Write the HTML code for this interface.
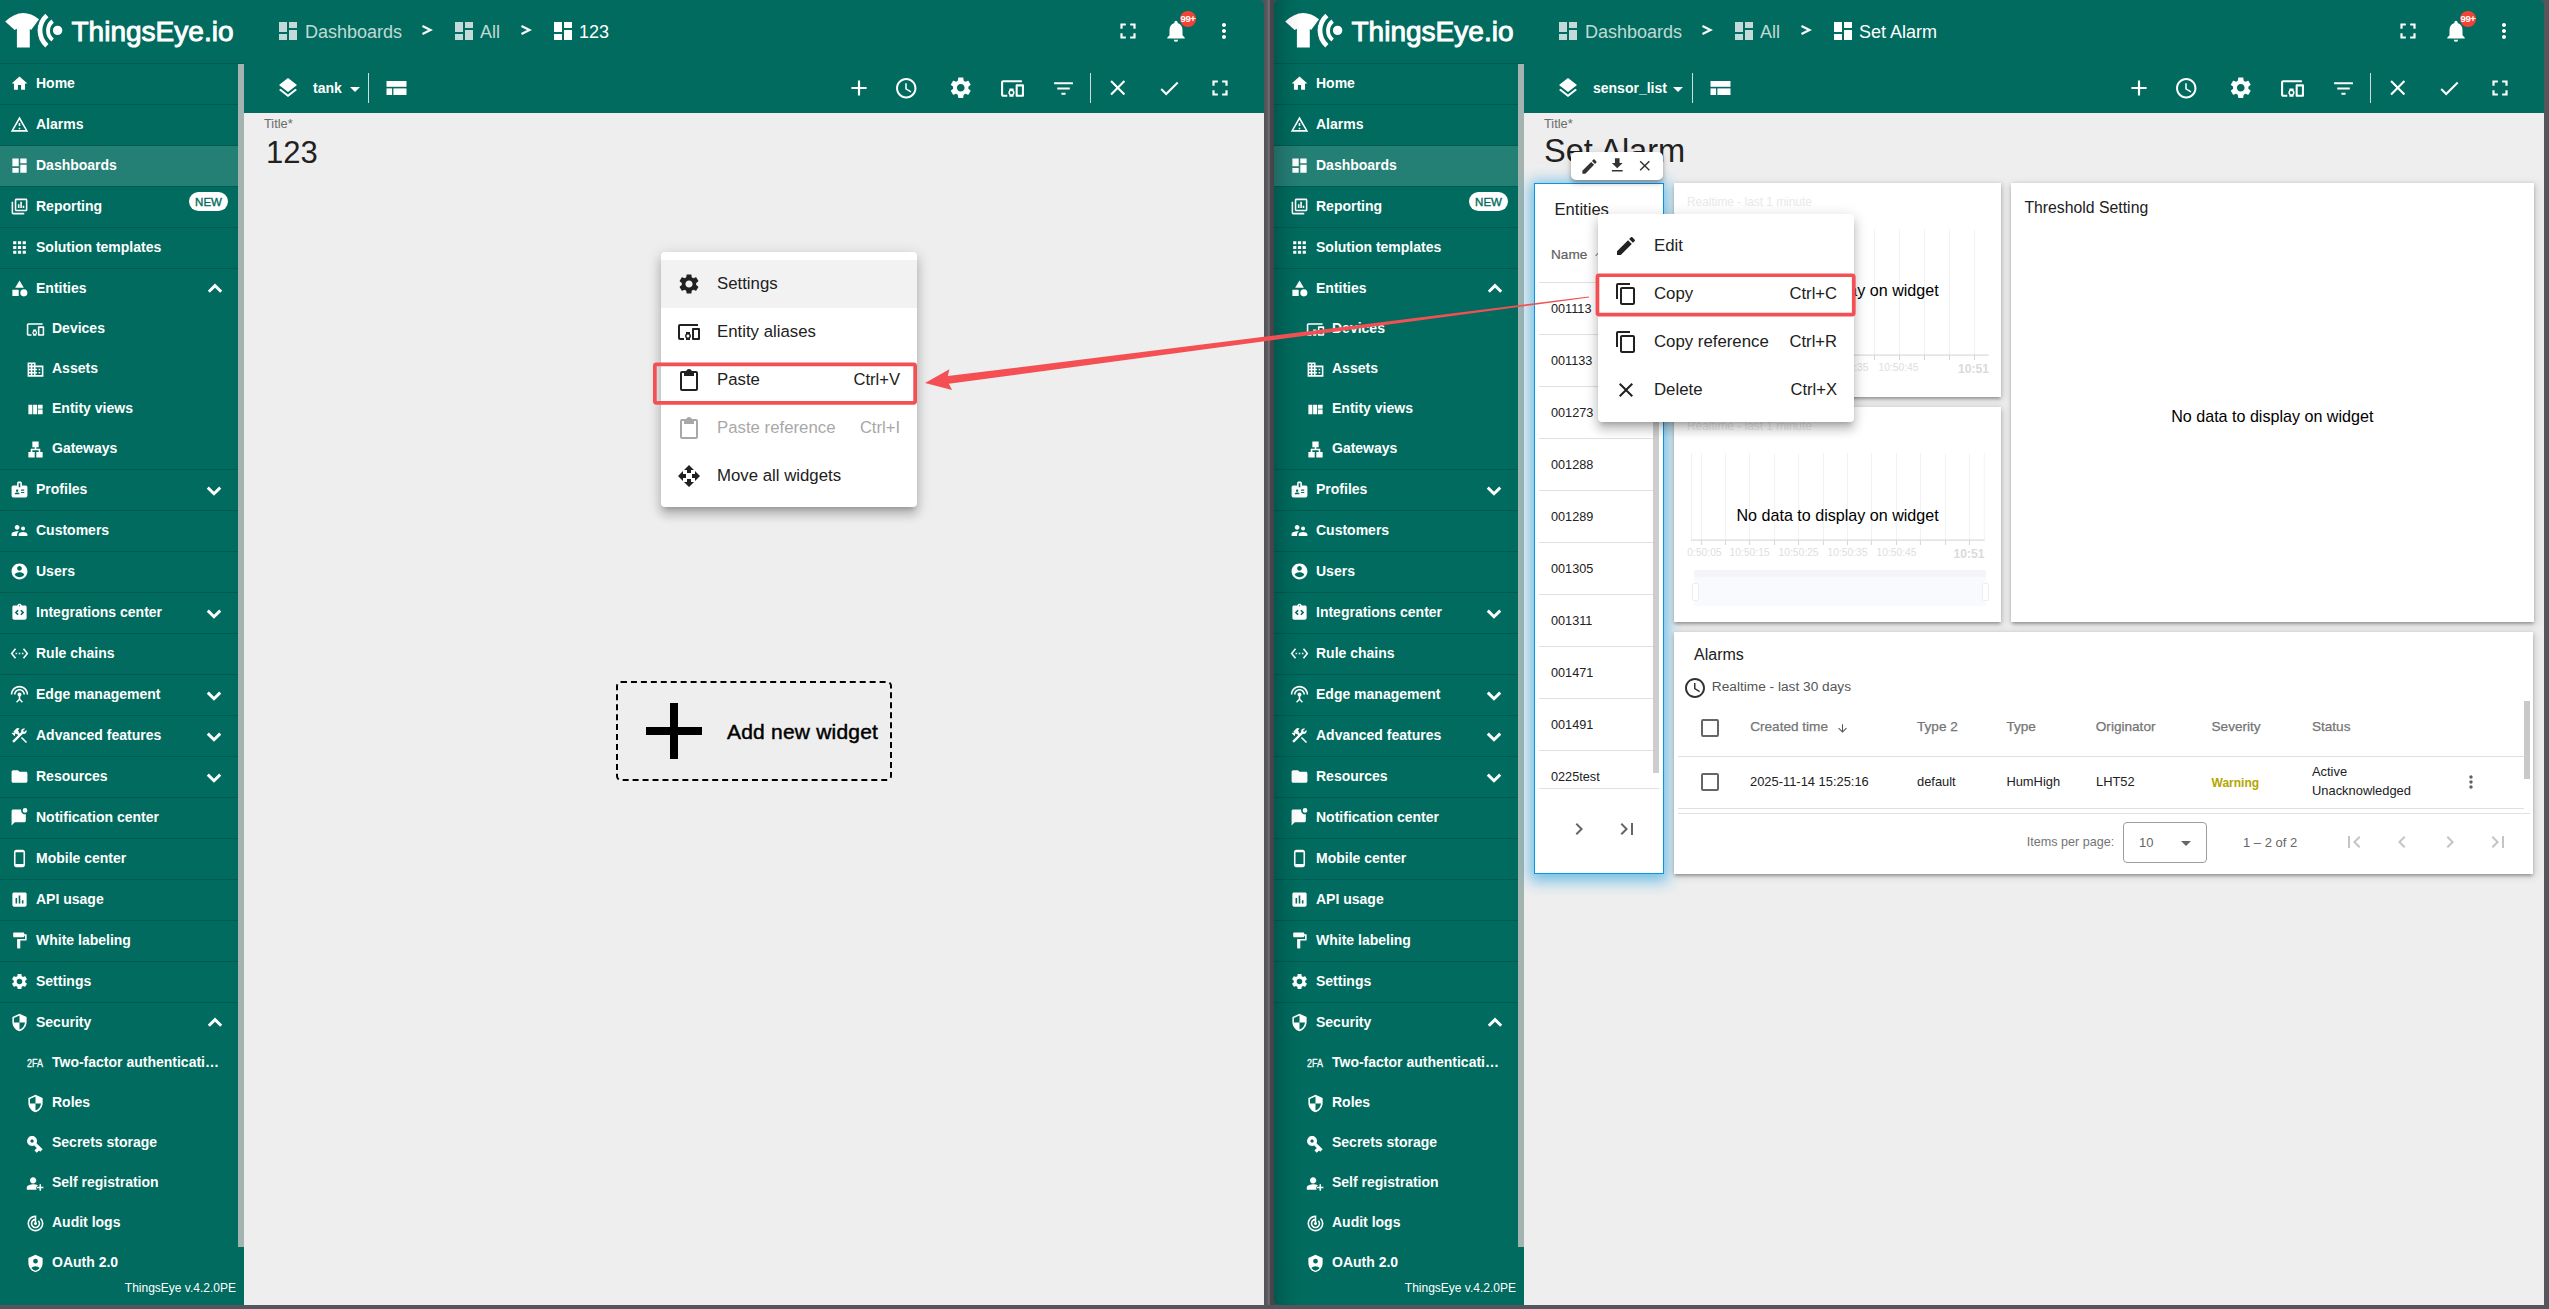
<!DOCTYPE html><html><head><meta charset="utf-8"><style>html,body{margin:0;padding:0;}body{width:2549px;height:1309px;position:relative;overflow:hidden;background:#55555b;font-family:"Liberation Sans", sans-serif;}svg{overflow:visible;}</style></head><body>
<div style="position:absolute;left:1264px;top:0;width:10px;height:1309px;background:linear-gradient(90deg,#525258 0%,#5a5a60 35%,#7a7a7a 50%,#48484c 62%,#444448 100%);"></div>
<div style="position:absolute;left:0px;top:0px;width:1264px;height:63px;background:#006b5e;border-top-right-radius:5px;"></div>
<svg style="position:absolute;left:0px;top:0px;" width="70" height="60" viewBox="0 0 70 60"><path fill="#fff" d="M5.2 21.5 Q22 5.5 39 19.3 L31.2 30 L29.8 28.8 L29.8 47.4 L16.9 47.4 L16.9 28.8 L14.6 30 Z"/><path fill="none" stroke="#fff" stroke-width="4.8" d="M46.88 15.51 A20 20 0 0 0 46.88 45.69"/><path fill="none" stroke="#fff" stroke-width="3.9" d="M52.61 21.14 A12 12 0 0 0 52.61 40.06"/><circle cx="57.6" cy="30.4" r="4.7" fill="#fff"/></svg>
<svg style="position:absolute;left:70px;top:10px" width="170" height="45" viewBox="0 0 170 45"><text x="1.5" y="31.2" font-family="Liberation Sans" font-size="26.8" font-weight="normal" fill="#fff" stroke="#fff" stroke-width="0.9" textLength="162" lengthAdjust="spacingAndGlyphs">ThingsEye.io</text></svg>
<svg style="position:absolute;left:275.50px;top:19.00px;" width="24" height="24" viewBox="0 0 24 24"><path fill="rgba(255,255,255,0.76)" d="M3 13h8V3H3v10zm0 8h8v-6H3v6zm10 0h8V11h-8v10zm0-18v6h8V3h-8z"/></svg>
<div style="position:absolute;left:305px;top:22.56px;font-size:18px;line-height:18px;color:rgba(255,255,255,0.76);font-weight:400;white-space:nowrap;">Dashboards</div>
<svg style="position:absolute;left:420px;top:24px;" width="14" height="12" viewBox="0 0 14 12"><polyline points="2.5,2 10.5,6 2.5,10" fill="none" stroke="#fff" stroke-width="2.2"/></svg>
<svg style="position:absolute;left:451.50px;top:19.00px;" width="24" height="24" viewBox="0 0 24 24"><path fill="rgba(255,255,255,0.76)" d="M3 13h8V3H3v10zm0 8h8v-6H3v6zm10 0h8V11h-8v10zm0-18v6h8V3h-8z"/></svg>
<div style="position:absolute;left:480px;top:22.56px;font-size:18px;line-height:18px;color:rgba(255,255,255,0.76);font-weight:400;white-space:nowrap;">All</div>
<svg style="position:absolute;left:519px;top:24px;" width="14" height="12" viewBox="0 0 14 12"><polyline points="2.5,2 10.5,6 2.5,10" fill="none" stroke="#fff" stroke-width="2.2"/></svg>
<svg style="position:absolute;left:550.50px;top:19.00px;" width="24" height="24" viewBox="0 0 24 24"><path fill="#fff" d="M3 13h8V3H3v10zm0 8h8v-6H3v6zm10 0h8V11h-8v10zm0-18v6h8V3h-8z"/></svg>
<div style="position:absolute;left:579px;top:22.56px;font-size:18px;line-height:18px;color:#fff;font-weight:400;white-space:nowrap;">123</div>
<svg style="position:absolute;left:1115.00px;top:18.00px;" width="26" height="26" viewBox="0 0 24 24"><path fill="#fff" d="M7 14H5v5h5v-2H7v-3zm-2-4h2V7h3V5H5v5zm12 7h-3v2h5v-5h-2v3zM14 5v2h3v3h2V5h-5z"/></svg>
<svg style="position:absolute;left:1162.50px;top:17.50px;" width="26" height="26" viewBox="0 0 24 24"><path fill="#fff" d="M12 22c1.1 0 2-.9 2-2h-4c0 1.1.89 2 2 2zm6-6v-5c0-3.07-1.64-5.64-4.5-6.32V4c0-.83-.67-1.5-1.5-1.5s-1.5.67-1.5 1.5v.68C7.63 5.36 6 7.92 6 11v5l-2 2v1h16v-1l-2-2z"/></svg>
<svg style="position:absolute;left:1212.00px;top:19.00px;" width="24" height="24" viewBox="0 0 24 24"><path fill="#fff" d="M12 8c1.1 0 2-.9 2-2s-.9-2-2-2-2 .9-2 2 .9 2 2 2zm0 2c-1.1 0-2 .9-2 2s.9 2 2 2 2-.9 2-2-.9-2-2-2zm0 6c-1.1 0-2 .9-2 2s.9 2 2 2 2-.9 2-2-.9-2-2-2z"/></svg>
<div style="position:absolute;left:1180px;top:11px;width:16px;height:16px;border-radius:8px;background:#f44336;"></div>
<div style="position:absolute;left:688px;width:1000px;text-align:center;top:14.17px;font-size:9.6px;line-height:9.6px;color:#fff;font-weight:700;white-space:nowrap;letter-spacing:-0.4px;">99+</div>
<div style="position:absolute;left:0px;top:63px;width:244px;height:1242px;background:#006b5e;"></div>
<div style="position:absolute;left:0px;top:63px;width:244px;height:1px;background:#005b50;"></div>
<svg style="position:absolute;left:9.50px;top:74.00px;" width="19" height="19" viewBox="0 0 24 24"><path fill="#fff" d="M10 20v-6h4v6h5v-8h3L12 3 2 12h3v8z"/></svg>
<div style="position:absolute;left:36px;top:75.85px;font-size:14px;line-height:14px;color:#fff;font-weight:700;white-space:nowrap;">Home</div>
<div style="position:absolute;left:0px;top:104px;width:238px;height:1px;background:#005b50;"></div>
<svg style="position:absolute;left:9.50px;top:115.00px;" width="19" height="19" viewBox="0 0 24 24"><path fill="#fff" d="M12 5.99L19.53 19H4.47L12 5.99M12 2L1 21h22L12 2zm1 14h-2v2h2v-2zm0-6h-2v4h2v-4z"/></svg>
<div style="position:absolute;left:36px;top:116.85px;font-size:14px;line-height:14px;color:#fff;font-weight:700;white-space:nowrap;">Alarms</div>
<div style="position:absolute;left:0px;top:145px;width:238px;height:1px;background:#005b50;"></div>
<div style="position:absolute;left:0px;top:146px;width:238px;height:40px;background:#247f75;"></div>
<svg style="position:absolute;left:9.50px;top:156.00px;" width="19" height="19" viewBox="0 0 24 24"><path fill="#fff" d="M3 13h8V3H3v10zm0 8h8v-6H3v6zm10 0h8V11h-8v10zm0-18v6h8V3h-8z"/></svg>
<div style="position:absolute;left:36px;top:157.85px;font-size:14px;line-height:14px;color:#fff;font-weight:700;white-space:nowrap;">Dashboards</div>
<div style="position:absolute;left:0px;top:186px;width:238px;height:1px;background:#005b50;"></div>
<svg style="position:absolute;left:9.50px;top:197.00px;" width="19" height="19" viewBox="0 0 24 24"><path fill="#fff" d="M4 6H2v14c0 1.1.9 2 2 2h14v-2H4V6zm16-4H8c-1.1 0-2 .9-2 2v12c0 1.1.9 2 2 2h12c1.1 0 2-.9 2-2V4c0-1.1-.9-2-2-2zm0 14H8V4h12v12zM10 9h2v5h-2zm3-3h2v8h-2zm3 5h2v3h-2z"/></svg>
<div style="position:absolute;left:36px;top:198.85px;font-size:14px;line-height:14px;color:#fff;font-weight:700;white-space:nowrap;">Reporting</div>
<div style="position:absolute;left:189px;top:192.0px;width:39px;height:19px;border-radius:10px;background:#fff;"></div>
<div style="position:absolute;left:-291.5px;width:1000px;text-align:center;top:197.07px;font-size:11.5px;line-height:11.5px;color:#006b5e;font-weight:400;white-space:nowrap;-webkit-text-stroke:0.35px #006b5e;">NEW</div>
<div style="position:absolute;left:0px;top:227px;width:238px;height:1px;background:#005b50;"></div>
<svg style="position:absolute;left:9.50px;top:238.00px;" width="19" height="19" viewBox="0 0 24 24"><path fill="#fff" d="M4 8h4V4H4v4zm6 12h4v-4h-4v4zm-6 0h4v-4H4v4zm0-6h4v-4H4v4zm6 0h4v-4h-4v4zm6-10v4h4V4h-4zm-6 4h4V4h-4v4zm6 6h4v-4h-4v4zm0 6h4v-4h-4v4z"/></svg>
<div style="position:absolute;left:36px;top:239.85px;font-size:14px;line-height:14px;color:#fff;font-weight:700;white-space:nowrap;">Solution templates</div>
<div style="position:absolute;left:0px;top:268px;width:238px;height:1px;background:#005b50;"></div>
<svg style="position:absolute;left:9.50px;top:279.00px;" width="19" height="19" viewBox="0 0 24 24"><path fill="#fff" d="M12 2l-5.5 9h11zM17.5 13a4.5 4.5 0 1 0 0 9a4.5 4.5 0 1 0 0-9zM3 13.5h8v8H3z"/></svg>
<div style="position:absolute;left:36px;top:280.85px;font-size:14px;line-height:14px;color:#fff;font-weight:700;white-space:nowrap;">Entities</div>
<svg style="position:absolute;left:207px;top:281.5px;" width="16" height="12" viewBox="0 0 16 12"><polyline points="1.8,9.8 8,3.6 14.2,9.8" fill="none" stroke="#fff" stroke-width="2.9"/></svg>
<svg style="position:absolute;left:25.50px;top:320.00px;" width="19" height="19" viewBox="0 0 24 24"><path fill="#fff" d="M3 6h18V4H3c-1.1 0-2 .9-2 2v12c0 1.1.9 2 2 2h4v-2H3V6zm10 6H9v1.78c-.61.55-1 1.33-1 2.22s.39 1.67 1 2.22V20h4v-1.78c.61-.55 1-1.34 1-2.22s-.39-1.67-1-2.22V12zm-2 5.5c-.83 0-1.5-.67-1.5-1.5s.67-1.5 1.5-1.5 1.5.67 1.5 1.5-.67 1.5-1.5 1.5zM22 8h-6c-.5 0-1 .5-1 1v10c0 .5.5 1 1 1h6c.5 0 1-.5 1-1V9c0-.5-.5-1-1-1zm-1 10h-4v-8h4v8z"/></svg>
<div style="position:absolute;left:52px;top:320.95px;font-size:14px;line-height:14px;color:#fff;font-weight:700;white-space:nowrap;">Devices</div>
<svg style="position:absolute;left:25.50px;top:360.00px;" width="19" height="19" viewBox="0 0 24 24"><path fill="#fff" d="M12 7V3H2v18h20V7H12zM6 19H4v-2h2v2zm0-4H4v-2h2v2zm0-4H4V9h2v2zm0-4H4V5h2v2zm4 12H8v-2h2v2zm0-4H8v-2h2v2zm0-4H8V9h2v2zm0-4H8V5h2v2zm10 12h-8v-2h2v-2h-2v-2h2v-2h-2V9h8v10zm-2-8h-2v2h2v-2zm0 4h-2v2h2v-2z"/></svg>
<div style="position:absolute;left:52px;top:360.95px;font-size:14px;line-height:14px;color:#fff;font-weight:700;white-space:nowrap;">Assets</div>
<svg style="position:absolute;left:25.50px;top:400.00px;" width="19" height="19" viewBox="0 0 24 24"><path fill="#fff" d="M3 6h5v12H3zM9 6h5v12H9zM15 6h6v5h-6zM15 12h6v6h-6z"/></svg>
<div style="position:absolute;left:52px;top:400.95px;font-size:14px;line-height:14px;color:#fff;font-weight:700;white-space:nowrap;">Entity views</div>
<svg style="position:absolute;left:25.50px;top:440.00px;" width="19" height="19" viewBox="0 0 24 24"><path fill="#fff" d="M13 22h8v-7h-3v-4h-5V9h3V2H8v7h3v2H6v4H3v7h8v-7H8v-2h8v2h-3z"/></svg>
<div style="position:absolute;left:52px;top:440.95px;font-size:14px;line-height:14px;color:#fff;font-weight:700;white-space:nowrap;">Gateways</div>
<div style="position:absolute;left:0px;top:469px;width:238px;height:1px;background:#005b50;"></div>
<svg style="position:absolute;left:9.50px;top:480.00px;" width="19" height="19" viewBox="0 0 24 24"><path fill="#fff" d="M20 7h-5V4c0-1.1-.9-2-2-2h-2c-1.1 0-2 .9-2 2v3H4c-1.1 0-2 .9-2 2v11c0 1.1.9 2 2 2h16c1.1 0 2-.9 2-2V9c0-1.1-.9-2-2-2zM9 12c.83 0 1.5.67 1.5 1.5S9.83 15 9 15s-1.5-.67-1.5-1.5S8.17 12 9 12zm3 6H6v-.43c0-.6.36-1.15.92-1.39.64-.28 1.34-.43 2.08-.43s1.44.15 2.08.43c.55.24.92.78.92 1.39V18zm1-9h-2V4h2v5zm5 7.5h-4V15h4v1.5zm0-3h-4V12h4v1.5z"/></svg>
<div style="position:absolute;left:36px;top:481.85px;font-size:14px;line-height:14px;color:#fff;font-weight:700;white-space:nowrap;">Profiles</div>
<svg style="position:absolute;left:206px;top:484.5px;" width="16" height="12" viewBox="0 0 16 12"><polyline points="1.8,2.6 8,8.8 14.2,2.6" fill="none" stroke="#fff" stroke-width="2.9"/></svg>
<div style="position:absolute;left:0px;top:510px;width:238px;height:1px;background:#005b50;"></div>
<svg style="position:absolute;left:9.50px;top:521.00px;" width="19" height="19" viewBox="0 0 24 24"><path fill="#fff" d="M16.5 12c1.38 0 2.49-1.12 2.49-2.5S17.88 7 16.5 7C15.12 7 14 8.12 14 9.5s1.12 2.5 2.5 2.5zM9 11c1.66 0 2.99-1.34 2.99-3S10.66 5 9 5C7.34 5 6 6.34 6 8s1.34 3 3 3zm7.5 3c-1.83 0-5.5.92-5.5 2.75V19h11v-2.25c0-1.83-3.67-2.75-5.5-2.75zM9 13c-2.33 0-7 1.17-7 3.5V19h7v-2.25c0-.85.33-2.34 2.37-3.47C10.5 13.1 9.66 13 9 13z"/></svg>
<div style="position:absolute;left:36px;top:522.85px;font-size:14px;line-height:14px;color:#fff;font-weight:700;white-space:nowrap;">Customers</div>
<div style="position:absolute;left:0px;top:551px;width:238px;height:1px;background:#005b50;"></div>
<svg style="position:absolute;left:9.50px;top:562.00px;" width="19" height="19" viewBox="0 0 24 24"><path fill="#fff" d="M12 2C6.48 2 2 6.48 2 12s4.48 10 10 10 10-4.48 10-10S17.52 2 12 2zm0 3c1.66 0 3 1.34 3 3s-1.34 3-3 3-3-1.34-3-3 1.34-3 3-3zm0 14.2c-2.5 0-4.71-1.28-6-3.22.03-1.99 4-3.08 6-3.08 1.99 0 5.97 1.09 6 3.08-1.29 1.94-3.5 3.22-6 3.22z"/></svg>
<div style="position:absolute;left:36px;top:563.85px;font-size:14px;line-height:14px;color:#fff;font-weight:700;white-space:nowrap;">Users</div>
<div style="position:absolute;left:0px;top:592px;width:238px;height:1px;background:#005b50;"></div>
<svg style="position:absolute;left:9.50px;top:603.00px;" width="19" height="19" viewBox="0 0 24 24"><path fill="#fff" d="M19 3h-4.18C14.4 1.84 13.3 1 12 1s-2.4.84-2.82 2H5c-1.1 0-2 .9-2 2v14c0 1.1.9 2 2 2h14c1.1 0 2-.9 2-2V5c0-1.1-.9-2-2-2zM11 14.17l-1.41 1.42L6 12l3.59-3.59L11 9.83 8.83 12 11 14.17zM12 4.25c-.41 0-.75-.34-.75-.75s.34-.75.75-.75.75.34.75.75-.34.75-.75.75zm2.41 11.34L13 14.17 15.17 12 13 9.83l1.41-1.42L18 12l-3.59 3.59z"/></svg>
<div style="position:absolute;left:36px;top:604.85px;font-size:14px;line-height:14px;color:#fff;font-weight:700;white-space:nowrap;">Integrations center</div>
<svg style="position:absolute;left:206px;top:607.5px;" width="16" height="12" viewBox="0 0 16 12"><polyline points="1.8,2.6 8,8.8 14.2,2.6" fill="none" stroke="#fff" stroke-width="2.9"/></svg>
<div style="position:absolute;left:0px;top:633px;width:238px;height:1px;background:#005b50;"></div>
<svg style="position:absolute;left:9.50px;top:644.00px;" width="19" height="19" viewBox="0 0 24 24"><path fill="#fff" d="M7.77 6.76L6.23 5.48.82 12l5.41 6.52 1.54-1.28L3.42 12l4.35-5.24zM7 13h2v-2H7v2zm10-2h-2v2h2v-2zm-6 2h2v-2h-2v2zm6.77-7.52l-1.54 1.28L20.58 12l-4.35 5.24 1.54 1.28L23.18 12l-5.41-6.52z"/></svg>
<div style="position:absolute;left:36px;top:645.85px;font-size:14px;line-height:14px;color:#fff;font-weight:700;white-space:nowrap;">Rule chains</div>
<div style="position:absolute;left:0px;top:674px;width:238px;height:1px;background:#005b50;"></div>
<svg style="position:absolute;left:9.50px;top:685.00px;" width="19" height="19" viewBox="0 0 24 24"><path fill="#fff" d="M12 5c-3.87 0-7 3.13-7 7h2c0-2.76 2.24-5 5-5s5 2.24 5 5h2c0-3.87-3.13-7-7-7zm1 9.29c.88-.39 1.5-1.26 1.5-2.29 0-1.38-1.12-2.5-2.5-2.5S9.5 10.62 9.5 12c0 1.02.62 1.9 1.5 2.29v3.3L7.59 21 9 22.41l3-3 3 3L16.41 21 13 17.59v-3.3zM12 1C5.93 1 1 5.93 1 12h2c0-4.97 4.03-9 9-9s9 4.03 9 9h2c0-6.07-4.93-11-11-11z"/></svg>
<div style="position:absolute;left:36px;top:686.85px;font-size:14px;line-height:14px;color:#fff;font-weight:700;white-space:nowrap;">Edge management</div>
<svg style="position:absolute;left:206px;top:689.5px;" width="16" height="12" viewBox="0 0 16 12"><polyline points="1.8,2.6 8,8.8 14.2,2.6" fill="none" stroke="#fff" stroke-width="2.9"/></svg>
<div style="position:absolute;left:0px;top:715px;width:238px;height:1px;background:#005b50;"></div>
<svg style="position:absolute;left:9.50px;top:726.00px;" width="19" height="19" viewBox="0 0 24 24"><path fill="#fff" d="M13.78 15.17l1.42-1.42 6.36 6.36-1.41 1.41zM17.5 10c1.93 0 3.5-1.57 3.5-3.5 0-.58-.16-1.12-.41-1.6l-2.7 2.7-1.49-1.49 2.7-2.7c-.48-.25-1.02-.41-1.6-.41C15.57 3 14 4.57 14 6.5c0 .41.08.8.21 1.16l-1.85 1.85-1.78-1.78.71-.71-1.41-1.41L12 3.49c-1.17-1.17-3.07-1.17-4.24 0L4.22 7.03l1.41 1.41H2.81l-.71.71 3.54 3.54.71-.71V9.15l1.41 1.41.71-.71 1.78 1.78-7.41 7.41 2.12 2.12L16.34 9.79c.36.13.75.21 1.16.21z"/></svg>
<div style="position:absolute;left:36px;top:727.85px;font-size:14px;line-height:14px;color:#fff;font-weight:700;white-space:nowrap;">Advanced features</div>
<svg style="position:absolute;left:206px;top:730.5px;" width="16" height="12" viewBox="0 0 16 12"><polyline points="1.8,2.6 8,8.8 14.2,2.6" fill="none" stroke="#fff" stroke-width="2.9"/></svg>
<div style="position:absolute;left:0px;top:756px;width:238px;height:1px;background:#005b50;"></div>
<svg style="position:absolute;left:9.50px;top:767.00px;" width="19" height="19" viewBox="0 0 24 24"><path fill="#fff" d="M10 4H4c-1.1 0-1.99.9-1.99 2L2 18c0 1.1.9 2 2 2h16c1.1 0 2-.9 2-2V8c0-1.1-.9-2-2-2h-8l-2-2z"/></svg>
<div style="position:absolute;left:36px;top:768.85px;font-size:14px;line-height:14px;color:#fff;font-weight:700;white-space:nowrap;">Resources</div>
<svg style="position:absolute;left:206px;top:771.5px;" width="16" height="12" viewBox="0 0 16 12"><polyline points="1.8,2.6 8,8.8 14.2,2.6" fill="none" stroke="#fff" stroke-width="2.9"/></svg>
<div style="position:absolute;left:0px;top:797px;width:238px;height:1px;background:#005b50;"></div>
<svg style="position:absolute;left:9.50px;top:808.00px;" width="19" height="19" viewBox="0 0 24 24"><path fill="#fff" d="M20 6.98V16c0 1.1-.9 2-2 2H6l-4 4V4c0-1.1.9-2 2-2h10.1c-.06.32-.1.66-.1 1 0 2.76 2.24 5 5 5 .34 0 .68-.03 1-.1zM19 0a3 3 0 1 0 0 6a3 3 0 1 0 0-6z"/></svg>
<div style="position:absolute;left:36px;top:809.85px;font-size:14px;line-height:14px;color:#fff;font-weight:700;white-space:nowrap;">Notification center</div>
<div style="position:absolute;left:0px;top:838px;width:238px;height:1px;background:#005b50;"></div>
<svg style="position:absolute;left:9.50px;top:849.00px;" width="19" height="19" viewBox="0 0 24 24"><path fill="#fff" d="M16 1H8C6.34 1 5 2.34 5 4v16c0 1.66 1.34 3 3 3h8c1.66 0 3-1.34 3-3V4c0-1.66-1.34-3-3-3zm1 18H7V4h10v15z"/></svg>
<div style="position:absolute;left:36px;top:850.85px;font-size:14px;line-height:14px;color:#fff;font-weight:700;white-space:nowrap;">Mobile center</div>
<div style="position:absolute;left:0px;top:879px;width:238px;height:1px;background:#005b50;"></div>
<svg style="position:absolute;left:9.50px;top:890.00px;" width="19" height="19" viewBox="0 0 24 24"><path fill="#fff" d="M19 3H5c-1.1 0-2 .9-2 2v14c0 1.1.9 2 2 2h14c1.1 0 2-.9 2-2V5c0-1.1-.9-2-2-2zM9 17H7v-7h2v7zm4 0h-2V7h2v10zm4 0h-2v-4h2v4z"/></svg>
<div style="position:absolute;left:36px;top:891.85px;font-size:14px;line-height:14px;color:#fff;font-weight:700;white-space:nowrap;">API usage</div>
<div style="position:absolute;left:0px;top:920px;width:238px;height:1px;background:#005b50;"></div>
<svg style="position:absolute;left:9.50px;top:931.00px;" width="19" height="19" viewBox="0 0 24 24"><path fill="#fff" d="M18 4V3c0-.55-.45-1-1-1H5c-.55 0-1 .45-1 1v4c0 .55.45 1 1 1h12c.55 0 1-.45 1-1V6h1v4H9v11c0 .55.45 1 1 1h2c.55 0 1-.45 1-1v-9h8V4h-3z"/></svg>
<div style="position:absolute;left:36px;top:932.85px;font-size:14px;line-height:14px;color:#fff;font-weight:700;white-space:nowrap;">White labeling</div>
<div style="position:absolute;left:0px;top:961px;width:238px;height:1px;background:#005b50;"></div>
<svg style="position:absolute;left:9.50px;top:972.00px;" width="19" height="19" viewBox="0 0 24 24"><path fill="#fff" d="M19.14 12.94c.04-.3.06-.61.06-.94 0-.32-.02-.64-.07-.94l2.03-1.58c.18-.14.23-.41.12-.61l-1.92-3.32c-.12-.22-.37-.29-.59-.22l-2.39.96c-.5-.38-1.03-.7-1.62-.94l-.36-2.54c-.04-.24-.24-.41-.48-.41h-3.84c-.24 0-.43.17-.47.41l-.36 2.54c-.59.24-1.13.57-1.62.94l-2.39-.96c-.22-.08-.47 0-.59.22L2.74 8.87c-.12.21-.08.47.12.61l2.03 1.58c-.05.3-.09.63-.09.94s.02.64.07.94l-2.03 1.58c-.18.14-.23.41-.12.61l1.92 3.32c.12.22.37.29.59.22l2.39-.96c.5.38 1.03.7 1.62.94l.36 2.54c.05.24.24.41.48.41h3.84c.24 0 .44-.17.47-.41l.36-2.54c.59-.24 1.13-.56 1.62-.94l2.39.96c.22.08.47 0 .59-.22l1.92-3.32c.12-.22.07-.47-.12-.61l-2.01-1.58zM12 15.6c-1.98 0-3.6-1.62-3.6-3.6s1.62-3.6 3.6-3.6 3.6 1.62 3.6 3.6-1.62 3.6-3.6 3.6z"/></svg>
<div style="position:absolute;left:36px;top:973.85px;font-size:14px;line-height:14px;color:#fff;font-weight:700;white-space:nowrap;">Settings</div>
<div style="position:absolute;left:0px;top:1002px;width:238px;height:1px;background:#005b50;"></div>
<svg style="position:absolute;left:9.50px;top:1013.00px;" width="19" height="19" viewBox="0 0 24 24"><path fill="#fff" d="M12 1L3 5v6c0 5.55 3.84 10.74 9 12 5.16-1.26 9-6.45 9-12V5l-9-4zm0 10.99h7c-.53 4.12-3.28 7.79-7 8.94V12H5V6.3l7-3.11v8.8z"/></svg>
<div style="position:absolute;left:36px;top:1014.85px;font-size:14px;line-height:14px;color:#fff;font-weight:700;white-space:nowrap;">Security</div>
<svg style="position:absolute;left:207px;top:1015.5px;" width="16" height="12" viewBox="0 0 16 12"><polyline points="1.8,9.8 8,3.6 14.2,9.8" fill="none" stroke="#fff" stroke-width="2.9"/></svg>
<div style="position:absolute;left:-465.5px;width:1000px;text-align:center;top:1058.21px;font-size:10.5px;line-height:10.5px;color:#fff;font-weight:400;white-space:nowrap;letter-spacing:0px;transform:scaleX(0.85);-webkit-text-stroke:0.3px #fff;">2FA</div>
<div style="position:absolute;left:52px;top:1054.95px;font-size:14px;line-height:14px;color:#fff;font-weight:700;white-space:nowrap;">Two-factor authenticati…</div>
<svg style="position:absolute;left:25.50px;top:1094.00px;" width="19" height="19" viewBox="0 0 24 24"><path fill="#fff" d="M12 1L3 5v6c0 5.55 3.84 10.74 9 12 5.16-1.26 9-6.45 9-12V5l-9-4zm0 10.99h7c-.53 4.12-3.28 7.79-7 8.94V12H5V6.3l7-3.11v8.8z"/></svg>
<div style="position:absolute;left:52px;top:1094.95px;font-size:14px;line-height:14px;color:#fff;font-weight:700;white-space:nowrap;">Roles</div>
<svg style="position:absolute;left:24.50px;top:1133.50px;transform:rotate(45deg);" width="20" height="20" viewBox="0 0 24 24"><path fill="#fff" d="M12.65 10C11.83 7.67 9.61 6 7 6c-3.31 0-6 2.69-6 6s2.69 6 6 6c2.61 0 4.83-1.67 5.65-4H17v4h4v-4h2v-4H12.65zM7 14c-1.1 0-2-.9-2-2s.9-2 2-2 2 .9 2 2-.9 2-2 2z"/></svg>
<div style="position:absolute;left:52px;top:1134.95px;font-size:14px;line-height:14px;color:#fff;font-weight:700;white-space:nowrap;">Secrets storage</div>
<svg style="position:absolute;left:25.50px;top:1174.00px;" width="19" height="19" viewBox="0 0 24 24"><path fill="#fff" d="M9 13c-2.67 0-8 1.34-8 4v3h12.5c-.32-.6-.5-1.28-.5-2 0-1.6.9-3 2.2-3.7C13 13.5 10.5 13 9 13zM9 12c2.21 0 4-1.79 4-4s-1.79-4-4-4-4 1.79-4 4 1.79 4 4 4zM19 13v3h3v2h-3v3h-2v-3h-3v-2h3v-3z"/></svg>
<div style="position:absolute;left:52px;top:1174.95px;font-size:14px;line-height:14px;color:#fff;font-weight:700;white-space:nowrap;">Self registration</div>
<svg style="position:absolute;left:25.50px;top:1214.00px;" width="19" height="19" viewBox="0 0 24 24"><path fill="#fff" d="M19.07 4.93l-1.41 1.41C19.1 7.79 20 9.79 20 12c0 4.42-3.58 8-8 8s-8-3.58-8-8c0-4.08 3.05-7.44 7-7.93v2.02C8.16 6.57 6 9.03 6 12c0 3.31 2.69 6 6 6s6-2.69 6-6c0-1.66-.67-3.16-1.76-4.24l-1.41 1.41C15.55 9.9 16 10.9 16 12c0 2.21-1.79 4-4 4s-4-1.79-4-4c0-1.86 1.28-3.41 3-3.86v2.14c-.6.35-1 .98-1 1.72 0 1.1.9 2 2 2s2-.9 2-2c0-.74-.4-1.38-1-1.72V2h-1C6.48 2 2 6.48 2 12s4.48 10 10 10 10-4.48 10-10c0-2.76-1.12-5.26-2.93-7.07z"/></svg>
<div style="position:absolute;left:52px;top:1214.95px;font-size:14px;line-height:14px;color:#fff;font-weight:700;white-space:nowrap;">Audit logs</div>
<svg style="position:absolute;left:25.50px;top:1254.00px;" width="19" height="19" viewBox="0 0 24 24"><path fill="#fff" d="M12 1L3 5v6c0 5.55 3.84 10.74 9 12 5.16-1.26 9-6.45 9-12V5l-9-4zm0 5a3 3 0 1 1 0 6 3 3 0 0 1 0-6zm5.13 12A9.69 9.69 0 0 1 12 21a9.69 9.69 0 0 1-5.13-3c.13-1.7 3.43-2.68 5.13-2.68s5 .98 5.13 2.68z"/></svg>
<div style="position:absolute;left:52px;top:1254.95px;font-size:14px;line-height:14px;color:#fff;font-weight:700;white-space:nowrap;">OAuth 2.0</div>
<div style="position:absolute;left:238px;top:64px;width:6px;height:1183px;background:#a3b4b0;"></div>
<div style="position:absolute;right:2313px;top:1281.84px;font-size:12px;line-height:12px;color:#fff;font-weight:400;white-space:nowrap;">ThingsEye v.4.2.0PE</div>
<div style="position:absolute;left:244px;top:63px;width:1020px;height:50px;background:#006b5e;"></div>
<div style="position:absolute;left:244px;top:113px;width:1020px;height:1192px;background:#eeeeee;"></div>
<svg style="position:absolute;left:276.00px;top:75.80px;" width="24" height="24" viewBox="0 0 24 24"><path fill="#fff" d="M11.99 18.54l-7.37-5.73L3 14.07l9 7 9-7-1.63-1.27-7.38 5.74zM12 16l7.36-5.73L21 9l-9-7-9 7 1.63 1.27L12 16z"/></svg>
<div style="position:absolute;left:313px;top:81.15px;font-size:14px;line-height:14px;color:#fff;font-weight:700;white-space:nowrap;">tank</div>
<svg style="position:absolute;left:342.50px;top:76.80px;" width="24" height="24" viewBox="0 0 24 24"><path fill="#fff" d="M7 10l5 5 5-5z"/></svg>
<div style="position:absolute;left:368px;top:73px;width:1px;height:30px;background:rgba(255,255,255,0.8);"></div>
<svg style="position:absolute;left:386px;top:81px;" width="21" height="15" viewBox="0 0 21 15"><rect x="0.5" y="0" width="20" height="5.8" fill="#fff"/><rect x="0.5" y="7.4" width="5.6" height="6.6" fill="#fff"/><rect x="7.4" y="7.4" width="13.1" height="6.6" fill="#fff"/></svg>
<svg style="position:absolute;left:846.00px;top:75.00px;" width="26" height="26" viewBox="0 0 24 24"><path fill="#fff" d="M19 13h-6v6h-2v-6H5v-2h6V5h2v6h6v2z"/></svg>
<svg style="position:absolute;left:893.75px;top:75.75px;" width="24.5" height="24.5" viewBox="0 0 24 24"><path fill="#fff" d="M11.99 2C6.47 2 2 6.48 2 12s4.47 10 9.99 10C17.52 22 22 17.52 22 12S17.52 2 11.99 2zM12 20c-4.42 0-8-3.58-8-8s3.58-8 8-8 8 3.58 8 8-3.58 8-8 8zm.5-13H11v6l5.25 3.15.75-1.23-4.5-2.67z"/></svg>
<svg style="position:absolute;left:948.25px;top:75.25px;" width="25.5" height="25.5" viewBox="0 0 24 24"><path fill="#fff" d="M19.14 12.94c.04-.3.06-.61.06-.94 0-.32-.02-.64-.07-.94l2.03-1.58c.18-.14.23-.41.12-.61l-1.92-3.32c-.12-.22-.37-.29-.59-.22l-2.39.96c-.5-.38-1.03-.7-1.62-.94l-.36-2.54c-.04-.24-.24-.41-.48-.41h-3.84c-.24 0-.43.17-.47.41l-.36 2.54c-.59.24-1.13.57-1.62.94l-2.39-.96c-.22-.08-.47 0-.59.22L2.74 8.87c-.12.21-.08.47.12.61l2.03 1.58c-.05.3-.09.63-.09.94s.02.64.07.94l-2.03 1.58c-.18.14-.23.41-.12.61l1.92 3.32c.12.22.37.29.59.22l2.39-.96c.5.38 1.03.7 1.62.94l.36 2.54c.05.24.24.41.48.41h3.84c.24 0 .44-.17.47-.41l.36-2.54c.59-.24 1.13-.56 1.62-.94l2.39.96c.22.08.47 0 .59-.22l1.92-3.32c.12-.22.07-.47-.12-.61l-2.01-1.58zM12 15.6c-1.98 0-3.6-1.62-3.6-3.6s1.62-3.6 3.6-3.6 3.6 1.62 3.6 3.6-1.62 3.6-3.6 3.6z"/></svg>
<svg style="position:absolute;left:999.50px;top:75.50px;" width="25" height="25" viewBox="0 0 24 24"><path fill="#fff" d="M3 6h18V4H3c-1.1 0-2 .9-2 2v12c0 1.1.9 2 2 2h4v-2H3V6zm10 6H9v1.78c-.61.55-1 1.33-1 2.22s.39 1.67 1 2.22V20h4v-1.78c.61-.55 1-1.34 1-2.22s-.39-1.67-1-2.22V12zm-2 5.5c-.83 0-1.5-.67-1.5-1.5s.67-1.5 1.5-1.5 1.5.67 1.5 1.5-.67 1.5-1.5 1.5zM22 8h-6c-.5 0-1 .5-1 1v10c0 .5.5 1 1 1h6c.5 0 1-.5 1-1V9c0-.5-.5-1-1-1zm-1 10h-4v-8h4v8z"/></svg>
<svg style="position:absolute;left:1050.50px;top:75.50px;" width="25" height="25" viewBox="0 0 24 24"><path fill="#fff" d="M10 18h4v-2h-4v2zM3 6v2h18V6H3zm3 7h12v-2H6v2z"/></svg>
<div style="position:absolute;left:1090px;top:73px;width:1px;height:30px;background:rgba(255,255,255,0.8);"></div>
<svg style="position:absolute;left:1105.25px;top:75.25px;" width="25.5" height="25.5" viewBox="0 0 24 24"><path fill="#fff" d="M19 6.41L17.59 5 12 10.59 6.41 5 5 6.41 10.59 12 5 17.59 6.41 19 12 13.41 17.59 19 19 17.59 13.41 12z"/></svg>
<svg style="position:absolute;left:1156.75px;top:75.75px;" width="24.5" height="24.5" viewBox="0 0 24 24"><path fill="#fff" d="M9 16.17L4.83 12l-1.42 1.41L9 19 21 7l-1.41-1.41z"/></svg>
<svg style="position:absolute;left:1207.00px;top:75.00px;" width="26" height="26" viewBox="0 0 24 24"><path fill="#fff" d="M7 14H5v5h5v-2H7v-3zm-2-4h2V7h3V5H5v5zm12 7h-3v2h5v-5h-2v3zM14 5v2h3v3h2V5h-5z"/></svg>
<div style="position:absolute;left:264px;top:118.16px;font-size:12.8px;line-height:12.8px;color:#6b6b6b;font-weight:400;white-space:nowrap;">Title*</div>
<div style="position:absolute;left:266px;top:136.76px;font-size:31px;line-height:31px;color:#212121;font-weight:400;white-space:nowrap;">123</div>
<div style="position:absolute;left:616px;top:681px;width:272px;height:96px;border:2px dashed #000;border-radius:5px;"></div>
<div style="position:absolute;left:645.5px;top:727.3px;width:56.5px;height:7.5px;background:#000;"></div>
<div style="position:absolute;left:670.2px;top:703px;width:7.5px;height:56px;background:#000;"></div>
<div style="position:absolute;left:727px;top:720.72px;font-size:21px;line-height:21px;color:#000;font-weight:400;white-space:nowrap;-webkit-text-stroke:0.45px #000;letter-spacing:0.2px;">Add new widget</div>
<div style="position:absolute;left:661px;top:252px;width:256px;height:255px;background:#fff;border-radius:4px;box-shadow:0 5px 5px -3px rgba(0,0,0,.2),0 8px 10px 1px rgba(0,0,0,.14),0 3px 14px 2px rgba(0,0,0,.12);"></div>
<div style="position:absolute;left:661px;top:260px;width:256px;height:48px;background:#f2f2f2;"></div>
<svg style="position:absolute;left:677.00px;top:272.00px;" width="24" height="24" viewBox="0 0 24 24"><path fill="#212121" d="M19.14 12.94c.04-.3.06-.61.06-.94 0-.32-.02-.64-.07-.94l2.03-1.58c.18-.14.23-.41.12-.61l-1.92-3.32c-.12-.22-.37-.29-.59-.22l-2.39.96c-.5-.38-1.03-.7-1.62-.94l-.36-2.54c-.04-.24-.24-.41-.48-.41h-3.84c-.24 0-.43.17-.47.41l-.36 2.54c-.59.24-1.13.57-1.62.94l-2.39-.96c-.22-.08-.47 0-.59.22L2.74 8.87c-.12.21-.08.47.12.61l2.03 1.58c-.05.3-.09.63-.09.94s.02.64.07.94l-2.03 1.58c-.18.14-.23.41-.12.61l1.92 3.32c.12.22.37.29.59.22l2.39-.96c.5.38 1.03.7 1.62.94l.36 2.54c.05.24.24.41.48.41h3.84c.24 0 .44-.17.47-.41l.36-2.54c.59-.24 1.13-.56 1.62-.94l2.39.96c.22.08.47 0 .59-.22l1.92-3.32c.12-.22.07-.47-.12-.61l-2.01-1.58zM12 15.6c-1.98 0-3.6-1.62-3.6-3.6s1.62-3.6 3.6-3.6 3.6 1.62 3.6 3.6-1.62 3.6-3.6 3.6z"/></svg>
<div style="position:absolute;left:717px;top:276.38px;font-size:16.8px;line-height:16.8px;color:#212121;font-weight:400;white-space:nowrap;">Settings</div>
<svg style="position:absolute;left:677.00px;top:320.00px;" width="24" height="24" viewBox="0 0 24 24"><path fill="#212121" d="M3 6h18V4H3c-1.1 0-2 .9-2 2v12c0 1.1.9 2 2 2h4v-2H3V6zm10 6H9v1.78c-.61.55-1 1.33-1 2.22s.39 1.67 1 2.22V20h4v-1.78c.61-.55 1-1.34 1-2.22s-.39-1.67-1-2.22V12zm-2 5.5c-.83 0-1.5-.67-1.5-1.5s.67-1.5 1.5-1.5 1.5.67 1.5 1.5-.67 1.5-1.5 1.5zM22 8h-6c-.5 0-1 .5-1 1v10c0 .5.5 1 1 1h6c.5 0 1-.5 1-1V9c0-.5-.5-1-1-1zm-1 10h-4v-8h4v8z"/></svg>
<div style="position:absolute;left:717px;top:324.38px;font-size:16.8px;line-height:16.8px;color:#212121;font-weight:400;white-space:nowrap;">Entity aliases</div>
<svg style="position:absolute;left:677.00px;top:368.00px;" width="24" height="24" viewBox="0 0 24 24"><path fill="#212121" d="M19 3h-4.18C14.4 1.84 13.3 1 12 1c-1.3 0-2.4.84-2.82 2H5c-1.1 0-2 .9-2 2v16c0 1.1.9 2 2 2h14c1.1 0 2-.9 2-2V5c0-1.1-.9-2-2-2zm0 18H5V5h2v3h10V5h2v16z"/></svg>
<div style="position:absolute;left:717px;top:372.38px;font-size:16.8px;line-height:16.8px;color:#212121;font-weight:400;white-space:nowrap;">Paste</div>
<div style="position:absolute;right:1649px;top:372.15px;font-size:16.6px;line-height:16.6px;color:#212121;font-weight:400;white-space:nowrap;">Ctrl+V</div>
<svg style="position:absolute;left:677.00px;top:416.00px;" width="24" height="24" viewBox="0 0 24 24"><path fill="#a8a8a8" d="M19 3h-4.18C14.4 1.84 13.3 1 12 1c-1.3 0-2.4.84-2.82 2H5c-1.1 0-2 .9-2 2v16c0 1.1.9 2 2 2h14c1.1 0 2-.9 2-2V5c0-1.1-.9-2-2-2zm0 18H5V5h2v3h10V5h2v16z"/></svg>
<div style="position:absolute;left:717px;top:420.38px;font-size:16.8px;line-height:16.8px;color:#a8a8a8;font-weight:400;white-space:nowrap;">Paste reference</div>
<div style="position:absolute;right:1649px;top:420.15px;font-size:16.6px;line-height:16.6px;color:#a8a8a8;font-weight:400;white-space:nowrap;">Ctrl+I</div>
<svg style="position:absolute;left:677.00px;top:464.00px;" width="24" height="24" viewBox="0 0 24 24"><path fill="#212121" d="M10 9h4V6h3l-5-5-5 5h3v3zm-1 1H6V7l-5 5 5 5v-3h3v-4zm14 2l-5-5v3h-3v4h3v3l5-5zm-9 3h-4v3H7l5 5 5-5h-3v-3z"/></svg>
<div style="position:absolute;left:717px;top:468.38px;font-size:16.8px;line-height:16.8px;color:#212121;font-weight:400;white-space:nowrap;">Move all widgets</div>
<svg style="position:absolute;left:0;top:0" width="2549" height="1309" viewBox="0 0 2549 1309"><rect x="654.85" y="364.45" width="260.30" height="38.40" rx="1.5" fill="none" stroke="#f44f53" stroke-width="3.7"/></svg>
<div style="position:absolute;left:1274px;top:0px;width:1270px;height:63px;background:#006b5e;border-top-right-radius:5px;border-top-left-radius:5px;"></div>
<svg style="position:absolute;left:1280px;top:0px;" width="70" height="60" viewBox="0 0 70 60"><path fill="#fff" d="M5.2 21.5 Q22 5.5 39 19.3 L31.2 30 L29.8 28.8 L29.8 47.4 L16.9 47.4 L16.9 28.8 L14.6 30 Z"/><path fill="none" stroke="#fff" stroke-width="4.8" d="M46.88 15.51 A20 20 0 0 0 46.88 45.69"/><path fill="none" stroke="#fff" stroke-width="3.9" d="M52.61 21.14 A12 12 0 0 0 52.61 40.06"/><circle cx="57.6" cy="30.4" r="4.7" fill="#fff"/></svg>
<svg style="position:absolute;left:1350px;top:10px" width="170" height="45" viewBox="0 0 170 45"><text x="1.5" y="31.2" font-family="Liberation Sans" font-size="26.8" font-weight="normal" fill="#fff" stroke="#fff" stroke-width="0.9" textLength="162" lengthAdjust="spacingAndGlyphs">ThingsEye.io</text></svg>
<svg style="position:absolute;left:1555.50px;top:19.00px;" width="24" height="24" viewBox="0 0 24 24"><path fill="rgba(255,255,255,0.76)" d="M3 13h8V3H3v10zm0 8h8v-6H3v6zm10 0h8V11h-8v10zm0-18v6h8V3h-8z"/></svg>
<div style="position:absolute;left:1585px;top:22.56px;font-size:18px;line-height:18px;color:rgba(255,255,255,0.76);font-weight:400;white-space:nowrap;">Dashboards</div>
<svg style="position:absolute;left:1700px;top:24px;" width="14" height="12" viewBox="0 0 14 12"><polyline points="2.5,2 10.5,6 2.5,10" fill="none" stroke="#fff" stroke-width="2.2"/></svg>
<svg style="position:absolute;left:1731.50px;top:19.00px;" width="24" height="24" viewBox="0 0 24 24"><path fill="rgba(255,255,255,0.76)" d="M3 13h8V3H3v10zm0 8h8v-6H3v6zm10 0h8V11h-8v10zm0-18v6h8V3h-8z"/></svg>
<div style="position:absolute;left:1760px;top:22.56px;font-size:18px;line-height:18px;color:rgba(255,255,255,0.76);font-weight:400;white-space:nowrap;">All</div>
<svg style="position:absolute;left:1799px;top:24px;" width="14" height="12" viewBox="0 0 14 12"><polyline points="2.5,2 10.5,6 2.5,10" fill="none" stroke="#fff" stroke-width="2.2"/></svg>
<svg style="position:absolute;left:1830.50px;top:19.00px;" width="24" height="24" viewBox="0 0 24 24"><path fill="#fff" d="M3 13h8V3H3v10zm0 8h8v-6H3v6zm10 0h8V11h-8v10zm0-18v6h8V3h-8z"/></svg>
<div style="position:absolute;left:1859px;top:22.56px;font-size:18px;line-height:18px;color:#fff;font-weight:400;white-space:nowrap;">Set Alarm</div>
<svg style="position:absolute;left:2395.00px;top:18.00px;" width="26" height="26" viewBox="0 0 24 24"><path fill="#fff" d="M7 14H5v5h5v-2H7v-3zm-2-4h2V7h3V5H5v5zm12 7h-3v2h5v-5h-2v3zM14 5v2h3v3h2V5h-5z"/></svg>
<svg style="position:absolute;left:2442.50px;top:17.50px;" width="26" height="26" viewBox="0 0 24 24"><path fill="#fff" d="M12 22c1.1 0 2-.9 2-2h-4c0 1.1.89 2 2 2zm6-6v-5c0-3.07-1.64-5.64-4.5-6.32V4c0-.83-.67-1.5-1.5-1.5s-1.5.67-1.5 1.5v.68C7.63 5.36 6 7.92 6 11v5l-2 2v1h16v-1l-2-2z"/></svg>
<svg style="position:absolute;left:2492.00px;top:19.00px;" width="24" height="24" viewBox="0 0 24 24"><path fill="#fff" d="M12 8c1.1 0 2-.9 2-2s-.9-2-2-2-2 .9-2 2 .9 2 2 2zm0 2c-1.1 0-2 .9-2 2s.9 2 2 2 2-.9 2-2-.9-2-2-2zm0 6c-1.1 0-2 .9-2 2s.9 2 2 2 2-.9 2-2-.9-2-2-2z"/></svg>
<div style="position:absolute;left:2460px;top:11px;width:16px;height:16px;border-radius:8px;background:#f44336;"></div>
<div style="position:absolute;left:1968px;width:1000px;text-align:center;top:14.17px;font-size:9.6px;line-height:9.6px;color:#fff;font-weight:700;white-space:nowrap;letter-spacing:-0.4px;">99+</div>
<div style="position:absolute;left:1274px;top:63px;width:250px;height:1242px;background:#006b5e;border-bottom-left-radius:5px;"></div>
<div style="position:absolute;left:1274px;top:63px;width:250px;height:1px;background:#005b50;"></div>
<svg style="position:absolute;left:1289.50px;top:74.00px;" width="19" height="19" viewBox="0 0 24 24"><path fill="#fff" d="M10 20v-6h4v6h5v-8h3L12 3 2 12h3v8z"/></svg>
<div style="position:absolute;left:1316px;top:75.85px;font-size:14px;line-height:14px;color:#fff;font-weight:700;white-space:nowrap;">Home</div>
<div style="position:absolute;left:1274px;top:104px;width:244px;height:1px;background:#005b50;"></div>
<svg style="position:absolute;left:1289.50px;top:115.00px;" width="19" height="19" viewBox="0 0 24 24"><path fill="#fff" d="M12 5.99L19.53 19H4.47L12 5.99M12 2L1 21h22L12 2zm1 14h-2v2h2v-2zm0-6h-2v4h2v-4z"/></svg>
<div style="position:absolute;left:1316px;top:116.85px;font-size:14px;line-height:14px;color:#fff;font-weight:700;white-space:nowrap;">Alarms</div>
<div style="position:absolute;left:1274px;top:145px;width:244px;height:1px;background:#005b50;"></div>
<div style="position:absolute;left:1274px;top:146px;width:244px;height:40px;background:#247f75;"></div>
<svg style="position:absolute;left:1289.50px;top:156.00px;" width="19" height="19" viewBox="0 0 24 24"><path fill="#fff" d="M3 13h8V3H3v10zm0 8h8v-6H3v6zm10 0h8V11h-8v10zm0-18v6h8V3h-8z"/></svg>
<div style="position:absolute;left:1316px;top:157.85px;font-size:14px;line-height:14px;color:#fff;font-weight:700;white-space:nowrap;">Dashboards</div>
<div style="position:absolute;left:1274px;top:186px;width:244px;height:1px;background:#005b50;"></div>
<svg style="position:absolute;left:1289.50px;top:197.00px;" width="19" height="19" viewBox="0 0 24 24"><path fill="#fff" d="M4 6H2v14c0 1.1.9 2 2 2h14v-2H4V6zm16-4H8c-1.1 0-2 .9-2 2v12c0 1.1.9 2 2 2h12c1.1 0 2-.9 2-2V4c0-1.1-.9-2-2-2zm0 14H8V4h12v12zM10 9h2v5h-2zm3-3h2v8h-2zm3 5h2v3h-2z"/></svg>
<div style="position:absolute;left:1316px;top:198.85px;font-size:14px;line-height:14px;color:#fff;font-weight:700;white-space:nowrap;">Reporting</div>
<div style="position:absolute;left:1469px;top:192.0px;width:39px;height:19px;border-radius:10px;background:#fff;"></div>
<div style="position:absolute;left:988.5px;width:1000px;text-align:center;top:197.07px;font-size:11.5px;line-height:11.5px;color:#006b5e;font-weight:400;white-space:nowrap;-webkit-text-stroke:0.35px #006b5e;">NEW</div>
<div style="position:absolute;left:1274px;top:227px;width:244px;height:1px;background:#005b50;"></div>
<svg style="position:absolute;left:1289.50px;top:238.00px;" width="19" height="19" viewBox="0 0 24 24"><path fill="#fff" d="M4 8h4V4H4v4zm6 12h4v-4h-4v4zm-6 0h4v-4H4v4zm0-6h4v-4H4v4zm6 0h4v-4h-4v4zm6-10v4h4V4h-4zm-6 4h4V4h-4v4zm6 6h4v-4h-4v4zm0 6h4v-4h-4v4z"/></svg>
<div style="position:absolute;left:1316px;top:239.85px;font-size:14px;line-height:14px;color:#fff;font-weight:700;white-space:nowrap;">Solution templates</div>
<div style="position:absolute;left:1274px;top:268px;width:244px;height:1px;background:#005b50;"></div>
<svg style="position:absolute;left:1289.50px;top:279.00px;" width="19" height="19" viewBox="0 0 24 24"><path fill="#fff" d="M12 2l-5.5 9h11zM17.5 13a4.5 4.5 0 1 0 0 9a4.5 4.5 0 1 0 0-9zM3 13.5h8v8H3z"/></svg>
<div style="position:absolute;left:1316px;top:280.85px;font-size:14px;line-height:14px;color:#fff;font-weight:700;white-space:nowrap;">Entities</div>
<svg style="position:absolute;left:1487px;top:281.5px;" width="16" height="12" viewBox="0 0 16 12"><polyline points="1.8,9.8 8,3.6 14.2,9.8" fill="none" stroke="#fff" stroke-width="2.9"/></svg>
<svg style="position:absolute;left:1305.50px;top:320.00px;" width="19" height="19" viewBox="0 0 24 24"><path fill="#fff" d="M3 6h18V4H3c-1.1 0-2 .9-2 2v12c0 1.1.9 2 2 2h4v-2H3V6zm10 6H9v1.78c-.61.55-1 1.33-1 2.22s.39 1.67 1 2.22V20h4v-1.78c.61-.55 1-1.34 1-2.22s-.39-1.67-1-2.22V12zm-2 5.5c-.83 0-1.5-.67-1.5-1.5s.67-1.5 1.5-1.5 1.5.67 1.5 1.5-.67 1.5-1.5 1.5zM22 8h-6c-.5 0-1 .5-1 1v10c0 .5.5 1 1 1h6c.5 0 1-.5 1-1V9c0-.5-.5-1-1-1zm-1 10h-4v-8h4v8z"/></svg>
<div style="position:absolute;left:1332px;top:320.95px;font-size:14px;line-height:14px;color:#fff;font-weight:700;white-space:nowrap;">Devices</div>
<svg style="position:absolute;left:1305.50px;top:360.00px;" width="19" height="19" viewBox="0 0 24 24"><path fill="#fff" d="M12 7V3H2v18h20V7H12zM6 19H4v-2h2v2zm0-4H4v-2h2v2zm0-4H4V9h2v2zm0-4H4V5h2v2zm4 12H8v-2h2v2zm0-4H8v-2h2v2zm0-4H8V9h2v2zm0-4H8V5h2v2zm10 12h-8v-2h2v-2h-2v-2h2v-2h-2V9h8v10zm-2-8h-2v2h2v-2zm0 4h-2v2h2v-2z"/></svg>
<div style="position:absolute;left:1332px;top:360.95px;font-size:14px;line-height:14px;color:#fff;font-weight:700;white-space:nowrap;">Assets</div>
<svg style="position:absolute;left:1305.50px;top:400.00px;" width="19" height="19" viewBox="0 0 24 24"><path fill="#fff" d="M3 6h5v12H3zM9 6h5v12H9zM15 6h6v5h-6zM15 12h6v6h-6z"/></svg>
<div style="position:absolute;left:1332px;top:400.95px;font-size:14px;line-height:14px;color:#fff;font-weight:700;white-space:nowrap;">Entity views</div>
<svg style="position:absolute;left:1305.50px;top:440.00px;" width="19" height="19" viewBox="0 0 24 24"><path fill="#fff" d="M13 22h8v-7h-3v-4h-5V9h3V2H8v7h3v2H6v4H3v7h8v-7H8v-2h8v2h-3z"/></svg>
<div style="position:absolute;left:1332px;top:440.95px;font-size:14px;line-height:14px;color:#fff;font-weight:700;white-space:nowrap;">Gateways</div>
<div style="position:absolute;left:1274px;top:469px;width:244px;height:1px;background:#005b50;"></div>
<svg style="position:absolute;left:1289.50px;top:480.00px;" width="19" height="19" viewBox="0 0 24 24"><path fill="#fff" d="M20 7h-5V4c0-1.1-.9-2-2-2h-2c-1.1 0-2 .9-2 2v3H4c-1.1 0-2 .9-2 2v11c0 1.1.9 2 2 2h16c1.1 0 2-.9 2-2V9c0-1.1-.9-2-2-2zM9 12c.83 0 1.5.67 1.5 1.5S9.83 15 9 15s-1.5-.67-1.5-1.5S8.17 12 9 12zm3 6H6v-.43c0-.6.36-1.15.92-1.39.64-.28 1.34-.43 2.08-.43s1.44.15 2.08.43c.55.24.92.78.92 1.39V18zm1-9h-2V4h2v5zm5 7.5h-4V15h4v1.5zm0-3h-4V12h4v1.5z"/></svg>
<div style="position:absolute;left:1316px;top:481.85px;font-size:14px;line-height:14px;color:#fff;font-weight:700;white-space:nowrap;">Profiles</div>
<svg style="position:absolute;left:1486px;top:484.5px;" width="16" height="12" viewBox="0 0 16 12"><polyline points="1.8,2.6 8,8.8 14.2,2.6" fill="none" stroke="#fff" stroke-width="2.9"/></svg>
<div style="position:absolute;left:1274px;top:510px;width:244px;height:1px;background:#005b50;"></div>
<svg style="position:absolute;left:1289.50px;top:521.00px;" width="19" height="19" viewBox="0 0 24 24"><path fill="#fff" d="M16.5 12c1.38 0 2.49-1.12 2.49-2.5S17.88 7 16.5 7C15.12 7 14 8.12 14 9.5s1.12 2.5 2.5 2.5zM9 11c1.66 0 2.99-1.34 2.99-3S10.66 5 9 5C7.34 5 6 6.34 6 8s1.34 3 3 3zm7.5 3c-1.83 0-5.5.92-5.5 2.75V19h11v-2.25c0-1.83-3.67-2.75-5.5-2.75zM9 13c-2.33 0-7 1.17-7 3.5V19h7v-2.25c0-.85.33-2.34 2.37-3.47C10.5 13.1 9.66 13 9 13z"/></svg>
<div style="position:absolute;left:1316px;top:522.85px;font-size:14px;line-height:14px;color:#fff;font-weight:700;white-space:nowrap;">Customers</div>
<div style="position:absolute;left:1274px;top:551px;width:244px;height:1px;background:#005b50;"></div>
<svg style="position:absolute;left:1289.50px;top:562.00px;" width="19" height="19" viewBox="0 0 24 24"><path fill="#fff" d="M12 2C6.48 2 2 6.48 2 12s4.48 10 10 10 10-4.48 10-10S17.52 2 12 2zm0 3c1.66 0 3 1.34 3 3s-1.34 3-3 3-3-1.34-3-3 1.34-3 3-3zm0 14.2c-2.5 0-4.71-1.28-6-3.22.03-1.99 4-3.08 6-3.08 1.99 0 5.97 1.09 6 3.08-1.29 1.94-3.5 3.22-6 3.22z"/></svg>
<div style="position:absolute;left:1316px;top:563.85px;font-size:14px;line-height:14px;color:#fff;font-weight:700;white-space:nowrap;">Users</div>
<div style="position:absolute;left:1274px;top:592px;width:244px;height:1px;background:#005b50;"></div>
<svg style="position:absolute;left:1289.50px;top:603.00px;" width="19" height="19" viewBox="0 0 24 24"><path fill="#fff" d="M19 3h-4.18C14.4 1.84 13.3 1 12 1s-2.4.84-2.82 2H5c-1.1 0-2 .9-2 2v14c0 1.1.9 2 2 2h14c1.1 0 2-.9 2-2V5c0-1.1-.9-2-2-2zM11 14.17l-1.41 1.42L6 12l3.59-3.59L11 9.83 8.83 12 11 14.17zM12 4.25c-.41 0-.75-.34-.75-.75s.34-.75.75-.75.75.34.75.75-.34.75-.75.75zm2.41 11.34L13 14.17 15.17 12 13 9.83l1.41-1.42L18 12l-3.59 3.59z"/></svg>
<div style="position:absolute;left:1316px;top:604.85px;font-size:14px;line-height:14px;color:#fff;font-weight:700;white-space:nowrap;">Integrations center</div>
<svg style="position:absolute;left:1486px;top:607.5px;" width="16" height="12" viewBox="0 0 16 12"><polyline points="1.8,2.6 8,8.8 14.2,2.6" fill="none" stroke="#fff" stroke-width="2.9"/></svg>
<div style="position:absolute;left:1274px;top:633px;width:244px;height:1px;background:#005b50;"></div>
<svg style="position:absolute;left:1289.50px;top:644.00px;" width="19" height="19" viewBox="0 0 24 24"><path fill="#fff" d="M7.77 6.76L6.23 5.48.82 12l5.41 6.52 1.54-1.28L3.42 12l4.35-5.24zM7 13h2v-2H7v2zm10-2h-2v2h2v-2zm-6 2h2v-2h-2v2zm6.77-7.52l-1.54 1.28L20.58 12l-4.35 5.24 1.54 1.28L23.18 12l-5.41-6.52z"/></svg>
<div style="position:absolute;left:1316px;top:645.85px;font-size:14px;line-height:14px;color:#fff;font-weight:700;white-space:nowrap;">Rule chains</div>
<div style="position:absolute;left:1274px;top:674px;width:244px;height:1px;background:#005b50;"></div>
<svg style="position:absolute;left:1289.50px;top:685.00px;" width="19" height="19" viewBox="0 0 24 24"><path fill="#fff" d="M12 5c-3.87 0-7 3.13-7 7h2c0-2.76 2.24-5 5-5s5 2.24 5 5h2c0-3.87-3.13-7-7-7zm1 9.29c.88-.39 1.5-1.26 1.5-2.29 0-1.38-1.12-2.5-2.5-2.5S9.5 10.62 9.5 12c0 1.02.62 1.9 1.5 2.29v3.3L7.59 21 9 22.41l3-3 3 3L16.41 21 13 17.59v-3.3zM12 1C5.93 1 1 5.93 1 12h2c0-4.97 4.03-9 9-9s9 4.03 9 9h2c0-6.07-4.93-11-11-11z"/></svg>
<div style="position:absolute;left:1316px;top:686.85px;font-size:14px;line-height:14px;color:#fff;font-weight:700;white-space:nowrap;">Edge management</div>
<svg style="position:absolute;left:1486px;top:689.5px;" width="16" height="12" viewBox="0 0 16 12"><polyline points="1.8,2.6 8,8.8 14.2,2.6" fill="none" stroke="#fff" stroke-width="2.9"/></svg>
<div style="position:absolute;left:1274px;top:715px;width:244px;height:1px;background:#005b50;"></div>
<svg style="position:absolute;left:1289.50px;top:726.00px;" width="19" height="19" viewBox="0 0 24 24"><path fill="#fff" d="M13.78 15.17l1.42-1.42 6.36 6.36-1.41 1.41zM17.5 10c1.93 0 3.5-1.57 3.5-3.5 0-.58-.16-1.12-.41-1.6l-2.7 2.7-1.49-1.49 2.7-2.7c-.48-.25-1.02-.41-1.6-.41C15.57 3 14 4.57 14 6.5c0 .41.08.8.21 1.16l-1.85 1.85-1.78-1.78.71-.71-1.41-1.41L12 3.49c-1.17-1.17-3.07-1.17-4.24 0L4.22 7.03l1.41 1.41H2.81l-.71.71 3.54 3.54.71-.71V9.15l1.41 1.41.71-.71 1.78 1.78-7.41 7.41 2.12 2.12L16.34 9.79c.36.13.75.21 1.16.21z"/></svg>
<div style="position:absolute;left:1316px;top:727.85px;font-size:14px;line-height:14px;color:#fff;font-weight:700;white-space:nowrap;">Advanced features</div>
<svg style="position:absolute;left:1486px;top:730.5px;" width="16" height="12" viewBox="0 0 16 12"><polyline points="1.8,2.6 8,8.8 14.2,2.6" fill="none" stroke="#fff" stroke-width="2.9"/></svg>
<div style="position:absolute;left:1274px;top:756px;width:244px;height:1px;background:#005b50;"></div>
<svg style="position:absolute;left:1289.50px;top:767.00px;" width="19" height="19" viewBox="0 0 24 24"><path fill="#fff" d="M10 4H4c-1.1 0-1.99.9-1.99 2L2 18c0 1.1.9 2 2 2h16c1.1 0 2-.9 2-2V8c0-1.1-.9-2-2-2h-8l-2-2z"/></svg>
<div style="position:absolute;left:1316px;top:768.85px;font-size:14px;line-height:14px;color:#fff;font-weight:700;white-space:nowrap;">Resources</div>
<svg style="position:absolute;left:1486px;top:771.5px;" width="16" height="12" viewBox="0 0 16 12"><polyline points="1.8,2.6 8,8.8 14.2,2.6" fill="none" stroke="#fff" stroke-width="2.9"/></svg>
<div style="position:absolute;left:1274px;top:797px;width:244px;height:1px;background:#005b50;"></div>
<svg style="position:absolute;left:1289.50px;top:808.00px;" width="19" height="19" viewBox="0 0 24 24"><path fill="#fff" d="M20 6.98V16c0 1.1-.9 2-2 2H6l-4 4V4c0-1.1.9-2 2-2h10.1c-.06.32-.1.66-.1 1 0 2.76 2.24 5 5 5 .34 0 .68-.03 1-.1zM19 0a3 3 0 1 0 0 6a3 3 0 1 0 0-6z"/></svg>
<div style="position:absolute;left:1316px;top:809.85px;font-size:14px;line-height:14px;color:#fff;font-weight:700;white-space:nowrap;">Notification center</div>
<div style="position:absolute;left:1274px;top:838px;width:244px;height:1px;background:#005b50;"></div>
<svg style="position:absolute;left:1289.50px;top:849.00px;" width="19" height="19" viewBox="0 0 24 24"><path fill="#fff" d="M16 1H8C6.34 1 5 2.34 5 4v16c0 1.66 1.34 3 3 3h8c1.66 0 3-1.34 3-3V4c0-1.66-1.34-3-3-3zm1 18H7V4h10v15z"/></svg>
<div style="position:absolute;left:1316px;top:850.85px;font-size:14px;line-height:14px;color:#fff;font-weight:700;white-space:nowrap;">Mobile center</div>
<div style="position:absolute;left:1274px;top:879px;width:244px;height:1px;background:#005b50;"></div>
<svg style="position:absolute;left:1289.50px;top:890.00px;" width="19" height="19" viewBox="0 0 24 24"><path fill="#fff" d="M19 3H5c-1.1 0-2 .9-2 2v14c0 1.1.9 2 2 2h14c1.1 0 2-.9 2-2V5c0-1.1-.9-2-2-2zM9 17H7v-7h2v7zm4 0h-2V7h2v10zm4 0h-2v-4h2v4z"/></svg>
<div style="position:absolute;left:1316px;top:891.85px;font-size:14px;line-height:14px;color:#fff;font-weight:700;white-space:nowrap;">API usage</div>
<div style="position:absolute;left:1274px;top:920px;width:244px;height:1px;background:#005b50;"></div>
<svg style="position:absolute;left:1289.50px;top:931.00px;" width="19" height="19" viewBox="0 0 24 24"><path fill="#fff" d="M18 4V3c0-.55-.45-1-1-1H5c-.55 0-1 .45-1 1v4c0 .55.45 1 1 1h12c.55 0 1-.45 1-1V6h1v4H9v11c0 .55.45 1 1 1h2c.55 0 1-.45 1-1v-9h8V4h-3z"/></svg>
<div style="position:absolute;left:1316px;top:932.85px;font-size:14px;line-height:14px;color:#fff;font-weight:700;white-space:nowrap;">White labeling</div>
<div style="position:absolute;left:1274px;top:961px;width:244px;height:1px;background:#005b50;"></div>
<svg style="position:absolute;left:1289.50px;top:972.00px;" width="19" height="19" viewBox="0 0 24 24"><path fill="#fff" d="M19.14 12.94c.04-.3.06-.61.06-.94 0-.32-.02-.64-.07-.94l2.03-1.58c.18-.14.23-.41.12-.61l-1.92-3.32c-.12-.22-.37-.29-.59-.22l-2.39.96c-.5-.38-1.03-.7-1.62-.94l-.36-2.54c-.04-.24-.24-.41-.48-.41h-3.84c-.24 0-.43.17-.47.41l-.36 2.54c-.59.24-1.13.57-1.62.94l-2.39-.96c-.22-.08-.47 0-.59.22L2.74 8.87c-.12.21-.08.47.12.61l2.03 1.58c-.05.3-.09.63-.09.94s.02.64.07.94l-2.03 1.58c-.18.14-.23.41-.12.61l1.92 3.32c.12.22.37.29.59.22l2.39-.96c.5.38 1.03.7 1.62.94l.36 2.54c.05.24.24.41.48.41h3.84c.24 0 .44-.17.47-.41l.36-2.54c.59-.24 1.13-.56 1.62-.94l2.39.96c.22.08.47 0 .59-.22l1.92-3.32c.12-.22.07-.47-.12-.61l-2.01-1.58zM12 15.6c-1.98 0-3.6-1.62-3.6-3.6s1.62-3.6 3.6-3.6 3.6 1.62 3.6 3.6-1.62 3.6-3.6 3.6z"/></svg>
<div style="position:absolute;left:1316px;top:973.85px;font-size:14px;line-height:14px;color:#fff;font-weight:700;white-space:nowrap;">Settings</div>
<div style="position:absolute;left:1274px;top:1002px;width:244px;height:1px;background:#005b50;"></div>
<svg style="position:absolute;left:1289.50px;top:1013.00px;" width="19" height="19" viewBox="0 0 24 24"><path fill="#fff" d="M12 1L3 5v6c0 5.55 3.84 10.74 9 12 5.16-1.26 9-6.45 9-12V5l-9-4zm0 10.99h7c-.53 4.12-3.28 7.79-7 8.94V12H5V6.3l7-3.11v8.8z"/></svg>
<div style="position:absolute;left:1316px;top:1014.85px;font-size:14px;line-height:14px;color:#fff;font-weight:700;white-space:nowrap;">Security</div>
<svg style="position:absolute;left:1487px;top:1015.5px;" width="16" height="12" viewBox="0 0 16 12"><polyline points="1.8,9.8 8,3.6 14.2,9.8" fill="none" stroke="#fff" stroke-width="2.9"/></svg>
<div style="position:absolute;left:814.5px;width:1000px;text-align:center;top:1058.21px;font-size:10.5px;line-height:10.5px;color:#fff;font-weight:400;white-space:nowrap;letter-spacing:0px;transform:scaleX(0.85);-webkit-text-stroke:0.3px #fff;">2FA</div>
<div style="position:absolute;left:1332px;top:1054.95px;font-size:14px;line-height:14px;color:#fff;font-weight:700;white-space:nowrap;">Two-factor authenticati…</div>
<svg style="position:absolute;left:1305.50px;top:1094.00px;" width="19" height="19" viewBox="0 0 24 24"><path fill="#fff" d="M12 1L3 5v6c0 5.55 3.84 10.74 9 12 5.16-1.26 9-6.45 9-12V5l-9-4zm0 10.99h7c-.53 4.12-3.28 7.79-7 8.94V12H5V6.3l7-3.11v8.8z"/></svg>
<div style="position:absolute;left:1332px;top:1094.95px;font-size:14px;line-height:14px;color:#fff;font-weight:700;white-space:nowrap;">Roles</div>
<svg style="position:absolute;left:1304.50px;top:1133.50px;transform:rotate(45deg);" width="20" height="20" viewBox="0 0 24 24"><path fill="#fff" d="M12.65 10C11.83 7.67 9.61 6 7 6c-3.31 0-6 2.69-6 6s2.69 6 6 6c2.61 0 4.83-1.67 5.65-4H17v4h4v-4h2v-4H12.65zM7 14c-1.1 0-2-.9-2-2s.9-2 2-2 2 .9 2 2-.9 2-2 2z"/></svg>
<div style="position:absolute;left:1332px;top:1134.95px;font-size:14px;line-height:14px;color:#fff;font-weight:700;white-space:nowrap;">Secrets storage</div>
<svg style="position:absolute;left:1305.50px;top:1174.00px;" width="19" height="19" viewBox="0 0 24 24"><path fill="#fff" d="M9 13c-2.67 0-8 1.34-8 4v3h12.5c-.32-.6-.5-1.28-.5-2 0-1.6.9-3 2.2-3.7C13 13.5 10.5 13 9 13zM9 12c2.21 0 4-1.79 4-4s-1.79-4-4-4-4 1.79-4 4 1.79 4 4 4zM19 13v3h3v2h-3v3h-2v-3h-3v-2h3v-3z"/></svg>
<div style="position:absolute;left:1332px;top:1174.95px;font-size:14px;line-height:14px;color:#fff;font-weight:700;white-space:nowrap;">Self registration</div>
<svg style="position:absolute;left:1305.50px;top:1214.00px;" width="19" height="19" viewBox="0 0 24 24"><path fill="#fff" d="M19.07 4.93l-1.41 1.41C19.1 7.79 20 9.79 20 12c0 4.42-3.58 8-8 8s-8-3.58-8-8c0-4.08 3.05-7.44 7-7.93v2.02C8.16 6.57 6 9.03 6 12c0 3.31 2.69 6 6 6s6-2.69 6-6c0-1.66-.67-3.16-1.76-4.24l-1.41 1.41C15.55 9.9 16 10.9 16 12c0 2.21-1.79 4-4 4s-4-1.79-4-4c0-1.86 1.28-3.41 3-3.86v2.14c-.6.35-1 .98-1 1.72 0 1.1.9 2 2 2s2-.9 2-2c0-.74-.4-1.38-1-1.72V2h-1C6.48 2 2 6.48 2 12s4.48 10 10 10 10-4.48 10-10c0-2.76-1.12-5.26-2.93-7.07z"/></svg>
<div style="position:absolute;left:1332px;top:1214.95px;font-size:14px;line-height:14px;color:#fff;font-weight:700;white-space:nowrap;">Audit logs</div>
<svg style="position:absolute;left:1305.50px;top:1254.00px;" width="19" height="19" viewBox="0 0 24 24"><path fill="#fff" d="M12 1L3 5v6c0 5.55 3.84 10.74 9 12 5.16-1.26 9-6.45 9-12V5l-9-4zm0 5a3 3 0 1 1 0 6 3 3 0 0 1 0-6zm5.13 12A9.69 9.69 0 0 1 12 21a9.69 9.69 0 0 1-5.13-3c.13-1.7 3.43-2.68 5.13-2.68s5 .98 5.13 2.68z"/></svg>
<div style="position:absolute;left:1332px;top:1254.95px;font-size:14px;line-height:14px;color:#fff;font-weight:700;white-space:nowrap;">OAuth 2.0</div>
<div style="position:absolute;left:1518px;top:64px;width:6px;height:1183px;background:#a3b4b0;"></div>
<div style="position:absolute;right:1033px;top:1281.84px;font-size:12px;line-height:12px;color:#fff;font-weight:400;white-space:nowrap;">ThingsEye v.4.2.0PE</div>
<div style="position:absolute;left:1524px;top:63px;width:1020px;height:50px;background:#006b5e;"></div>
<div style="position:absolute;left:1524px;top:113px;width:1020px;height:1192px;background:#eeeeee;"></div>
<svg style="position:absolute;left:1556.00px;top:75.80px;" width="24" height="24" viewBox="0 0 24 24"><path fill="#fff" d="M11.99 18.54l-7.37-5.73L3 14.07l9 7 9-7-1.63-1.27-7.38 5.74zM12 16l7.36-5.73L21 9l-9-7-9 7 1.63 1.27L12 16z"/></svg>
<div style="position:absolute;left:1593px;top:81.15px;font-size:14px;line-height:14px;color:#fff;font-weight:700;white-space:nowrap;">sensor_list</div>
<svg style="position:absolute;left:1665.50px;top:76.80px;" width="24" height="24" viewBox="0 0 24 24"><path fill="#fff" d="M7 10l5 5 5-5z"/></svg>
<div style="position:absolute;left:1692.4px;top:73px;width:1px;height:30px;background:rgba(255,255,255,0.8);"></div>
<svg style="position:absolute;left:1710px;top:81px;" width="21" height="15" viewBox="0 0 21 15"><rect x="0.5" y="0" width="20" height="5.8" fill="#fff"/><rect x="0.5" y="7.4" width="5.6" height="6.6" fill="#fff"/><rect x="7.4" y="7.4" width="13.1" height="6.6" fill="#fff"/></svg>
<svg style="position:absolute;left:2126.00px;top:75.00px;" width="26" height="26" viewBox="0 0 24 24"><path fill="#fff" d="M19 13h-6v6h-2v-6H5v-2h6V5h2v6h6v2z"/></svg>
<svg style="position:absolute;left:2173.75px;top:75.75px;" width="24.5" height="24.5" viewBox="0 0 24 24"><path fill="#fff" d="M11.99 2C6.47 2 2 6.48 2 12s4.47 10 9.99 10C17.52 22 22 17.52 22 12S17.52 2 11.99 2zM12 20c-4.42 0-8-3.58-8-8s3.58-8 8-8 8 3.58 8 8-3.58 8-8 8zm.5-13H11v6l5.25 3.15.75-1.23-4.5-2.67z"/></svg>
<svg style="position:absolute;left:2228.25px;top:75.25px;" width="25.5" height="25.5" viewBox="0 0 24 24"><path fill="#fff" d="M19.14 12.94c.04-.3.06-.61.06-.94 0-.32-.02-.64-.07-.94l2.03-1.58c.18-.14.23-.41.12-.61l-1.92-3.32c-.12-.22-.37-.29-.59-.22l-2.39.96c-.5-.38-1.03-.7-1.62-.94l-.36-2.54c-.04-.24-.24-.41-.48-.41h-3.84c-.24 0-.43.17-.47.41l-.36 2.54c-.59.24-1.13.57-1.62.94l-2.39-.96c-.22-.08-.47 0-.59.22L2.74 8.87c-.12.21-.08.47.12.61l2.03 1.58c-.05.3-.09.63-.09.94s.02.64.07.94l-2.03 1.58c-.18.14-.23.41-.12.61l1.92 3.32c.12.22.37.29.59.22l2.39-.96c.5.38 1.03.7 1.62.94l.36 2.54c.05.24.24.41.48.41h3.84c.24 0 .44-.17.47-.41l.36-2.54c.59-.24 1.13-.56 1.62-.94l2.39.96c.22.08.47 0 .59-.22l1.92-3.32c.12-.22.07-.47-.12-.61l-2.01-1.58zM12 15.6c-1.98 0-3.6-1.62-3.6-3.6s1.62-3.6 3.6-3.6 3.6 1.62 3.6 3.6-1.62 3.6-3.6 3.6z"/></svg>
<svg style="position:absolute;left:2279.50px;top:75.50px;" width="25" height="25" viewBox="0 0 24 24"><path fill="#fff" d="M3 6h18V4H3c-1.1 0-2 .9-2 2v12c0 1.1.9 2 2 2h4v-2H3V6zm10 6H9v1.78c-.61.55-1 1.33-1 2.22s.39 1.67 1 2.22V20h4v-1.78c.61-.55 1-1.34 1-2.22s-.39-1.67-1-2.22V12zm-2 5.5c-.83 0-1.5-.67-1.5-1.5s.67-1.5 1.5-1.5 1.5.67 1.5 1.5-.67 1.5-1.5 1.5zM22 8h-6c-.5 0-1 .5-1 1v10c0 .5.5 1 1 1h6c.5 0 1-.5 1-1V9c0-.5-.5-1-1-1zm-1 10h-4v-8h4v8z"/></svg>
<svg style="position:absolute;left:2330.50px;top:75.50px;" width="25" height="25" viewBox="0 0 24 24"><path fill="#fff" d="M10 18h4v-2h-4v2zM3 6v2h18V6H3zm3 7h12v-2H6v2z"/></svg>
<div style="position:absolute;left:2370px;top:73px;width:1px;height:30px;background:rgba(255,255,255,0.8);"></div>
<svg style="position:absolute;left:2385.25px;top:75.25px;" width="25.5" height="25.5" viewBox="0 0 24 24"><path fill="#fff" d="M19 6.41L17.59 5 12 10.59 6.41 5 5 6.41 10.59 12 5 17.59 6.41 19 12 13.41 17.59 19 19 17.59 13.41 12z"/></svg>
<svg style="position:absolute;left:2436.75px;top:75.75px;" width="24.5" height="24.5" viewBox="0 0 24 24"><path fill="#fff" d="M9 16.17L4.83 12l-1.42 1.41L9 19 21 7l-1.41-1.41z"/></svg>
<svg style="position:absolute;left:2487.00px;top:75.00px;" width="26" height="26" viewBox="0 0 24 24"><path fill="#fff" d="M7 14H5v5h5v-2H7v-3zm-2-4h2V7h3V5H5v5zm12 7h-3v2h5v-5h-2v3zM14 5v2h3v3h2V5h-5z"/></svg>
<div style="position:absolute;left:1544px;top:118.16px;font-size:12.8px;line-height:12.8px;color:#6b6b6b;font-weight:400;white-space:nowrap;">Title*</div>
<div style="position:absolute;left:1544px;top:135.40px;font-size:32.6px;line-height:32.6px;color:#212121;font-weight:400;white-space:nowrap;">Set Alarm</div>
<div style="position:absolute;left:1534px;top:183px;width:128px;height:689px;background:#fff;border:1px solid #0b95e5;box-shadow:0 3px 14px 4px rgba(30,160,225,0.62);"></div>
<div style="position:absolute;left:1554.5px;top:201.95px;font-size:16.6px;line-height:16.6px;color:#212121;font-weight:400;white-space:nowrap;">Entities</div>
<div style="position:absolute;left:1551px;top:248.19px;font-size:13.6px;line-height:13.6px;color:#616161;font-weight:400;white-space:nowrap;-webkit-text-stroke:0.2px #616161;">Name</div>
<svg style="position:absolute;left:1592.50px;top:248.50px;transform:rotate(180deg);" width="13" height="13" viewBox="0 0 24 24"><path fill="#888" d="M20 12l-1.41-1.41L13 16.17V4h-2v12.17l-5.58-5.59L4 12l8 8 8-8z"/></svg>
<div style="position:absolute;left:1539px;top:282px;width:114px;height:1px;background:#e0e0e0;"></div>
<div style="position:absolute;left:1551px;top:302.75px;font-size:12.7px;line-height:12.7px;color:#212121;font-weight:400;white-space:nowrap;">001113</div>
<div style="position:absolute;left:1539px;top:334px;width:114px;height:1px;background:#e0e0e0;"></div>
<div style="position:absolute;left:1551px;top:354.75px;font-size:12.7px;line-height:12.7px;color:#212121;font-weight:400;white-space:nowrap;">001133</div>
<div style="position:absolute;left:1539px;top:386px;width:114px;height:1px;background:#e0e0e0;"></div>
<div style="position:absolute;left:1551px;top:406.75px;font-size:12.7px;line-height:12.7px;color:#212121;font-weight:400;white-space:nowrap;">001273</div>
<div style="position:absolute;left:1539px;top:438px;width:114px;height:1px;background:#e0e0e0;"></div>
<div style="position:absolute;left:1551px;top:458.75px;font-size:12.7px;line-height:12.7px;color:#212121;font-weight:400;white-space:nowrap;">001288</div>
<div style="position:absolute;left:1539px;top:490px;width:114px;height:1px;background:#e0e0e0;"></div>
<div style="position:absolute;left:1551px;top:510.75px;font-size:12.7px;line-height:12.7px;color:#212121;font-weight:400;white-space:nowrap;">001289</div>
<div style="position:absolute;left:1539px;top:542px;width:114px;height:1px;background:#e0e0e0;"></div>
<div style="position:absolute;left:1551px;top:562.75px;font-size:12.7px;line-height:12.7px;color:#212121;font-weight:400;white-space:nowrap;">001305</div>
<div style="position:absolute;left:1539px;top:594px;width:114px;height:1px;background:#e0e0e0;"></div>
<div style="position:absolute;left:1551px;top:614.75px;font-size:12.7px;line-height:12.7px;color:#212121;font-weight:400;white-space:nowrap;">001311</div>
<div style="position:absolute;left:1539px;top:646px;width:114px;height:1px;background:#e0e0e0;"></div>
<div style="position:absolute;left:1551px;top:666.75px;font-size:12.7px;line-height:12.7px;color:#212121;font-weight:400;white-space:nowrap;">001471</div>
<div style="position:absolute;left:1539px;top:698px;width:114px;height:1px;background:#e0e0e0;"></div>
<div style="position:absolute;left:1551px;top:718.75px;font-size:12.7px;line-height:12.7px;color:#212121;font-weight:400;white-space:nowrap;">001491</div>
<div style="position:absolute;left:1539px;top:750px;width:114px;height:1px;background:#e0e0e0;"></div>
<div style="position:absolute;left:1551px;top:770.75px;font-size:12.7px;line-height:12.7px;color:#212121;font-weight:400;white-space:nowrap;">0225test</div>
<div style="position:absolute;left:1653px;top:283px;width:6px;height:490px;background:#cdcdcd;"></div>
<div style="position:absolute;left:1539px;top:788px;width:120px;height:1px;background:#e0e0e0;"></div>
<svg style="position:absolute;left:1567.00px;top:817.00px;" width="24" height="24" viewBox="0 0 24 24"><path fill="#666" d="M10 6L8.59 7.41 13.17 12l-4.58 4.59L10 18l6-6z"/></svg>
<svg style="position:absolute;left:1615.00px;top:817.00px;" width="24" height="24" viewBox="0 0 24 24"><path fill="#666" d="M5.59 7.41L10.18 12l-4.59 4.59L7 18l6-6-6-6zM16 6h2v12h-2z"/></svg>
<div style="position:absolute;left:1674px;top:183px;width:327px;height:214px;background:#fff;box-shadow:0 3px 3px -1px rgba(0,0,0,.22),0 1px 4px 0 rgba(0,0,0,.16),2px 2px 8px 1px rgba(0,0,0,.11);"></div>
<div style="position:absolute;left:1687px;top:197.43px;font-size:11.9px;line-height:11.9px;color:#e9e9e9;font-weight:400;white-space:nowrap;">Realtime - last 1 minute</div>
<svg style="position:absolute;left:1674px;top:183px;overflow:hidden;" width="327" height="215" viewBox="0 0 327 215"><rect x="17" y="46" width="0.8" height="126" fill="#eeeeee"/><rect x="25.1" y="46" width="0.8" height="126" fill="#efefef"/><rect x="25.0" y="172" width="1" height="5" fill="#d6d6d6"/><rect x="50.1" y="46" width="0.8" height="126" fill="#efefef"/><rect x="50.0" y="172" width="1" height="5" fill="#d6d6d6"/><rect x="75.1" y="46" width="0.8" height="126" fill="#efefef"/><rect x="75.0" y="172" width="1" height="5" fill="#d6d6d6"/><rect x="100.1" y="46" width="0.8" height="126" fill="#efefef"/><rect x="100.0" y="172" width="1" height="5" fill="#d6d6d6"/><rect x="125.1" y="46" width="0.8" height="126" fill="#efefef"/><rect x="125.0" y="172" width="1" height="5" fill="#d6d6d6"/><rect x="150.1" y="46" width="0.8" height="126" fill="#efefef"/><rect x="150.0" y="172" width="1" height="5" fill="#d6d6d6"/><rect x="175.1" y="46" width="0.8" height="126" fill="#efefef"/><rect x="175.0" y="172" width="1" height="5" fill="#d6d6d6"/><rect x="200.1" y="46" width="0.8" height="126" fill="#efefef"/><rect x="200.0" y="172" width="1" height="5" fill="#d6d6d6"/><rect x="225.1" y="46" width="0.8" height="126" fill="#efefef"/><rect x="225.0" y="172" width="1" height="5" fill="#d6d6d6"/><rect x="250.1" y="46" width="0.8" height="126" fill="#efefef"/><rect x="250.0" y="172" width="1" height="5" fill="#d6d6d6"/><rect x="275.1" y="46" width="0.8" height="126" fill="#efefef"/><rect x="275.0" y="172" width="1" height="5" fill="#d6d6d6"/><rect x="300.1" y="46" width="0.8" height="126" fill="#efefef"/><rect x="300.0" y="172" width="1" height="5" fill="#d6d6d6"/><rect x="17" y="171.5" width="297.7" height="1.2" fill="#d9d9d9"/></svg>
<div style="position:absolute;left:1687px;top:183px;width:305.7px;height:215px;overflow:hidden;">
<div style="position:absolute;left:-338.5px;width:1000px;text-align:center;top:179.78px;font-size:10.3px;line-height:10.3px;color:#dedede;font-weight:400;white-space:nowrap;">10:50:35</div>
<div style="position:absolute;left:-288.5px;width:1000px;text-align:center;top:179.78px;font-size:10.3px;line-height:10.3px;color:#dedede;font-weight:400;white-space:nowrap;">10:50:45</div>
<div style="position:absolute;left:-388.5px;width:1000px;text-align:center;top:179.78px;font-size:10.3px;line-height:10.3px;color:#dedede;font-weight:400;white-space:nowrap;">10:50:25</div>
<div style="position:absolute;left:-438.5px;width:1000px;text-align:center;top:179.78px;font-size:10.3px;line-height:10.3px;color:#dedede;font-weight:400;white-space:nowrap;">10:50:15</div>
<div style="position:absolute;left:-488.5px;width:1000px;text-align:center;top:179.78px;font-size:10.3px;line-height:10.3px;color:#dedede;font-weight:400;white-space:nowrap;">10:50:05</div>
</div>
<div style="position:absolute;left:1473.5px;width:1000px;text-align:center;top:363.17px;font-size:12.2px;line-height:12.2px;color:#dadada;font-weight:700;white-space:nowrap;">10:51</div>
<div style="position:absolute;left:1337.6px;width:1000px;text-align:center;top:281.97px;font-size:16.1px;line-height:16.1px;color:#000;font-weight:400;white-space:nowrap;">No data to display on widget</div>
<div style="position:absolute;left:1674px;top:407px;width:327px;height:215px;background:#fff;box-shadow:0 3px 3px -1px rgba(0,0,0,.22),0 1px 4px 0 rgba(0,0,0,.16),2px 2px 8px 1px rgba(0,0,0,.11);"></div>
<div style="position:absolute;left:1687px;top:421.43px;font-size:11.9px;line-height:11.9px;color:#e9e9e9;font-weight:400;white-space:nowrap;">Realtime - last 1 minute</div>
<svg style="position:absolute;left:1674px;top:407px;overflow:hidden;" width="327" height="215" viewBox="0 0 327 215"><rect x="17" y="46" width="0.8" height="87" fill="#eeeeee"/><rect x="309.8" y="46" width="0.8" height="87" fill="#eeeeee"/><rect x="27.2" y="46" width="0.8" height="87" fill="#efefef"/><rect x="27.1" y="133" width="1" height="5" fill="#d6d6d6"/><rect x="51.1" y="46" width="0.8" height="87" fill="#efefef"/><rect x="51.0" y="133" width="1" height="5" fill="#d6d6d6"/><rect x="75.2" y="46" width="0.8" height="87" fill="#efefef"/><rect x="75.1" y="133" width="1" height="5" fill="#d6d6d6"/><rect x="100.2" y="46" width="0.8" height="87" fill="#efefef"/><rect x="100.1" y="133" width="1" height="5" fill="#d6d6d6"/><rect x="124.1" y="46" width="0.8" height="87" fill="#efefef"/><rect x="124.0" y="133" width="1" height="5" fill="#d6d6d6"/><rect x="149.0" y="46" width="0.8" height="87" fill="#efefef"/><rect x="148.9" y="133" width="1" height="5" fill="#d6d6d6"/><rect x="173.1" y="46" width="0.8" height="87" fill="#efefef"/><rect x="173.0" y="133" width="1" height="5" fill="#d6d6d6"/><rect x="197.0" y="46" width="0.8" height="87" fill="#efefef"/><rect x="196.9" y="133" width="1" height="5" fill="#d6d6d6"/><rect x="222.1" y="46" width="0.8" height="87" fill="#efefef"/><rect x="222.0" y="133" width="1" height="5" fill="#d6d6d6"/><rect x="246.0" y="46" width="0.8" height="87" fill="#efefef"/><rect x="245.9" y="133" width="1" height="5" fill="#d6d6d6"/><rect x="271.2" y="46" width="0.8" height="87" fill="#efefef"/><rect x="271.1" y="133" width="1" height="5" fill="#d6d6d6"/><rect x="295.1" y="46" width="0.8" height="87" fill="#efefef"/><rect x="295.0" y="133" width="1" height="5" fill="#d6d6d6"/><rect x="17" y="132.5" width="293.6" height="1.2" fill="#d9d9d9"/></svg>
<div style="position:absolute;left:1687px;top:407px;width:301.6px;height:215px;overflow:hidden;">
<div style="position:absolute;left:-485.4000000000001px;width:1000px;text-align:center;top:140.78px;font-size:10.3px;line-height:10.3px;color:#dedede;font-weight:400;white-space:nowrap;">10:50:05</div>
<div style="position:absolute;left:-437.4000000000001px;width:1000px;text-align:center;top:140.78px;font-size:10.3px;line-height:10.3px;color:#dedede;font-weight:400;white-space:nowrap;">10:50:15</div>
<div style="position:absolute;left:-388.5px;width:1000px;text-align:center;top:140.78px;font-size:10.3px;line-height:10.3px;color:#dedede;font-weight:400;white-space:nowrap;">10:50:25</div>
<div style="position:absolute;left:-339.5px;width:1000px;text-align:center;top:140.78px;font-size:10.3px;line-height:10.3px;color:#dedede;font-weight:400;white-space:nowrap;">10:50:35</div>
<div style="position:absolute;left:-290.5px;width:1000px;text-align:center;top:140.78px;font-size:10.3px;line-height:10.3px;color:#dedede;font-weight:400;white-space:nowrap;">10:50:45</div>
</div>
<div style="position:absolute;left:1469px;width:1000px;text-align:center;top:548.17px;font-size:12.2px;line-height:12.2px;color:#dadada;font-weight:700;white-space:nowrap;">10:51</div>
<div style="position:absolute;left:1337.6px;width:1000px;text-align:center;top:506.77px;font-size:16.1px;line-height:16.1px;color:#000;font-weight:400;white-space:nowrap;">No data to display on widget</div>
<div style="position:absolute;left:1694px;top:570px;width:292px;height:36px;background:#f9fafd;border-radius:1px;"></div>
<div style="position:absolute;left:1694px;top:570px;width:292px;height:7px;background:#f3f5f9;"></div>
<div style="position:absolute;left:1691.5px;top:583px;width:5px;height:16px;background:#fff;border:1px solid #eceef1;border-radius:2px;"></div>
<div style="position:absolute;left:1982px;top:583px;width:5px;height:16px;background:#fff;border:1px solid #eceef1;border-radius:2px;"></div>
<div style="position:absolute;left:2011px;top:183px;width:523px;height:439px;background:#fff;box-shadow:0 3px 3px -1px rgba(0,0,0,.22),0 1px 4px 0 rgba(0,0,0,.16),2px 2px 8px 1px rgba(0,0,0,.11);"></div>
<div style="position:absolute;left:2024.4px;top:200.03px;font-size:15.8px;line-height:15.8px;color:#212121;font-weight:400;white-space:nowrap;">Threshold Setting</div>
<div style="position:absolute;left:1772.3000000000002px;width:1000px;text-align:center;top:408.17px;font-size:16.1px;line-height:16.1px;color:#000;font-weight:400;white-space:nowrap;">No data to display on widget</div>
<div style="position:absolute;left:1674px;top:632px;width:859px;height:242px;background:#fff;box-shadow:0 3px 3px -1px rgba(0,0,0,.22),0 1px 4px 0 rgba(0,0,0,.16),2px 2px 8px 1px rgba(0,0,0,.11);"></div>
<div style="position:absolute;left:1694px;top:647.46px;font-size:16px;line-height:16px;color:#212121;font-weight:400;white-space:nowrap;">Alarms</div>
<svg style="position:absolute;left:1683.30px;top:676.00px;" width="24" height="24" viewBox="0 0 24 24"><path fill="#333" d="M11.99 2C6.47 2 2 6.48 2 12s4.47 10 9.99 10C17.52 22 22 17.52 22 12S17.52 2 11.99 2zM12 20c-4.42 0-8-3.58-8-8s3.58-8 8-8 8 3.58 8 8-3.58 8-8 8zm.5-13H11v6l5.25 3.15.75-1.23-4.5-2.67z"/></svg>
<div style="position:absolute;left:1711.8px;top:680.40px;font-size:13.7px;line-height:13.7px;color:#555;font-weight:400;white-space:nowrap;">Realtime - last 30 days</div>
<div style="position:absolute;left:1701px;top:718.7px;width:14px;height:14px;border:2px solid #666;border-radius:2px;"></div>
<div style="position:absolute;left:1750.2px;top:719.99px;font-size:13.6px;line-height:13.6px;color:#757575;font-weight:400;white-space:nowrap;-webkit-text-stroke:0.25px #757575;">Created time</div>
<div style="position:absolute;left:1917px;top:719.99px;font-size:13.6px;line-height:13.6px;color:#757575;font-weight:400;white-space:nowrap;-webkit-text-stroke:0.25px #757575;">Type 2</div>
<div style="position:absolute;left:2006.4px;top:719.99px;font-size:13.6px;line-height:13.6px;color:#757575;font-weight:400;white-space:nowrap;-webkit-text-stroke:0.25px #757575;">Type</div>
<div style="position:absolute;left:2095.8px;top:719.99px;font-size:13.6px;line-height:13.6px;color:#757575;font-weight:400;white-space:nowrap;-webkit-text-stroke:0.25px #757575;">Originator</div>
<div style="position:absolute;left:2211.5px;top:719.99px;font-size:13.6px;line-height:13.6px;color:#757575;font-weight:400;white-space:nowrap;-webkit-text-stroke:0.25px #757575;">Severity</div>
<div style="position:absolute;left:2311.9px;top:719.99px;font-size:13.6px;line-height:13.6px;color:#757575;font-weight:400;white-space:nowrap;-webkit-text-stroke:0.25px #757575;">Status</div>
<svg style="position:absolute;left:1835.80px;top:721.50px;" width="13" height="13" viewBox="0 0 24 24"><path fill="#555" d="M20 12l-1.41-1.41L13 16.17V4h-2v12.17l-5.58-5.59L4 12l8 8 8-8z"/></svg>
<div style="position:absolute;left:1678px;top:756px;width:846px;height:1px;background:#e0e0e0;"></div>
<div style="position:absolute;left:1701px;top:773px;width:14px;height:14px;border:2px solid #666;border-radius:2px;"></div>
<div style="position:absolute;left:1750px;top:775.88px;font-size:12.9px;line-height:12.9px;color:#212121;font-weight:400;white-space:nowrap;">2025-11-14 15:25:16</div>
<div style="position:absolute;left:1917px;top:775.88px;font-size:12.9px;line-height:12.9px;color:#212121;font-weight:400;white-space:nowrap;">default</div>
<div style="position:absolute;left:2006.4px;top:775.88px;font-size:12.9px;line-height:12.9px;color:#212121;font-weight:400;white-space:nowrap;">HumHigh</div>
<div style="position:absolute;left:2096px;top:775.88px;font-size:12.9px;line-height:12.9px;color:#212121;font-weight:400;white-space:nowrap;">LHT52</div>
<div style="position:absolute;left:2211.5px;top:776.64px;font-size:12.0px;line-height:12.0px;color:#b3a600;font-weight:700;white-space:nowrap;">Warning</div>
<div style="position:absolute;left:2312px;top:766.08px;font-size:12.9px;line-height:12.9px;color:#212121;font-weight:400;white-space:nowrap;">Active</div>
<div style="position:absolute;left:2312px;top:785.38px;font-size:12.9px;line-height:12.9px;color:#212121;font-weight:400;white-space:nowrap;">Unacknowledged</div>
<svg style="position:absolute;left:2461.00px;top:772.00px;" width="20" height="20" viewBox="0 0 24 24"><path fill="#616161" d="M12 8c1.1 0 2-.9 2-2s-.9-2-2-2-2 .9-2 2 .9 2 2 2zm0 2c-1.1 0-2 .9-2 2s.9 2 2 2 2-.9 2-2-.9-2-2-2zm0 6c-1.1 0-2 .9-2 2s.9 2 2 2 2-.9 2-2-.9-2-2-2z"/></svg>
<div style="position:absolute;left:1678px;top:808px;width:846px;height:1px;background:#e0e0e0;"></div>
<div style="position:absolute;left:1678px;top:813px;width:852px;height:1px;background:#e0e0e0;"></div>
<div style="position:absolute;left:2524px;top:701px;width:6px;height:78px;background:#c9c9c9;"></div>
<div style="position:absolute;right:434.6999999999998px;top:836.33px;font-size:12.6px;line-height:12.6px;color:#757575;font-weight:400;white-space:nowrap;">Items per page:</div>
<div style="position:absolute;left:2123px;top:822px;width:82px;height:39px;border:1px solid #9e9e9e;border-radius:4px;"></div>
<div style="position:absolute;left:2139px;top:835.70px;font-size:13px;line-height:13px;color:#666;font-weight:400;white-space:nowrap;">10</div>
<svg style="position:absolute;left:2174.00px;top:830.50px;" width="24" height="24" viewBox="0 0 24 24"><path fill="#666" d="M7 10l5 5 5-5z"/></svg>
<div style="position:absolute;left:2243px;top:836.00px;font-size:13px;line-height:13px;color:#666;font-weight:400;white-space:nowrap;">1 – 2 of 2</div>
<svg style="position:absolute;left:2342.00px;top:830.20px;" width="24" height="24" viewBox="0 0 24 24"><path fill="#c4c4c4" d="M18.41 16.59L13.82 12l4.59-4.59L17 6l-6 6 6 6zM6 6h2v12H6z"/></svg>
<svg style="position:absolute;left:2390.40px;top:830.20px;" width="24" height="24" viewBox="0 0 24 24"><path fill="#c4c4c4" d="M15.41 7.41L14 6l-6 6 6 6 1.41-1.41L10.83 12z"/></svg>
<svg style="position:absolute;left:2437.80px;top:830.20px;" width="24" height="24" viewBox="0 0 24 24"><path fill="#c4c4c4" d="M10 6L8.59 7.41 13.17 12l-4.58 4.59L10 18l6-6z"/></svg>
<svg style="position:absolute;left:2485.90px;top:830.20px;" width="24" height="24" viewBox="0 0 24 24"><path fill="#c4c4c4" d="M5.59 7.41L10.18 12l-4.59 4.59L7 18l6-6-6-6zM16 6h2v12h-2z"/></svg>
<div style="position:absolute;left:1571px;top:152px;width:92px;height:28px;background:#fff;border-radius:5px;box-shadow:0 2px 4px -1px rgba(0,0,0,.2),0 4px 5px 0 rgba(0,0,0,.14),0 1px 10px 0 rgba(0,0,0,.12);"></div>
<svg style="position:absolute;left:1580.00px;top:157.00px;" width="19" height="19" viewBox="0 0 24 24"><path fill="#333" d="M3 17.25V21h3.75L17.81 9.94l-3.75-3.75L3 17.25zM20.71 7.04c.39-.39.39-1.02 0-1.41l-2.34-2.34c-.39-.39-1.02-.39-1.41 0l-1.83 1.83 3.75 3.75 1.83-1.83z"/></svg>
<svg style="position:absolute;left:1607.95px;top:156.25px;" width="18.5" height="18.5" viewBox="0 0 24 24"><path fill="#333" d="M19 9h-4V3H9v6H5l7 7 7-7zM5 18v2h14v-2H5z"/></svg>
<svg style="position:absolute;left:1636.25px;top:157.25px;" width="17.5" height="17.5" viewBox="0 0 24 24"><path fill="#333" d="M19 6.41L17.59 5 12 10.59 6.41 5 5 6.41 10.59 12 5 17.59 6.41 19 12 13.41 17.59 19 19 17.59 13.41 12z"/></svg>
<div style="position:absolute;left:1598px;top:214px;width:256px;height:208px;background:#fff;border-radius:4px;box-shadow:0 5px 5px -3px rgba(0,0,0,.2),0 8px 10px 1px rgba(0,0,0,.14),0 3px 14px 2px rgba(0,0,0,.12);"></div>
<svg style="position:absolute;left:1614.00px;top:234.00px;" width="24" height="24" viewBox="0 0 24 24"><path fill="#212121" d="M3 17.25V21h3.75L17.81 9.94l-3.75-3.75L3 17.25zM20.71 7.04c.39-.39.39-1.02 0-1.41l-2.34-2.34c-.39-.39-1.02-.39-1.41 0l-1.83 1.83 3.75 3.75 1.83-1.83z"/></svg>
<div style="position:absolute;left:1654px;top:238.38px;font-size:16.8px;line-height:16.8px;color:#212121;font-weight:400;white-space:nowrap;">Edit</div>
<svg style="position:absolute;left:1614.00px;top:282.00px;" width="24" height="24" viewBox="0 0 24 24"><path fill="#212121" d="M16 1H4c-1.1 0-2 .9-2 2v14h2V3h12V1zm3 4H8c-1.1 0-2 .9-2 2v14c0 1.1.9 2 2 2h11c1.1 0 2-.9 2-2V7c0-1.1-.9-2-2-2zm0 16H8V7h11v14z"/></svg>
<div style="position:absolute;left:1654px;top:286.38px;font-size:16.8px;line-height:16.8px;color:#212121;font-weight:400;white-space:nowrap;">Copy</div>
<div style="position:absolute;right:712px;top:286.15px;font-size:16.6px;line-height:16.6px;color:#212121;font-weight:400;white-space:nowrap;">Ctrl+C</div>
<svg style="position:absolute;left:1614.00px;top:330.00px;" width="24" height="24" viewBox="0 0 24 24"><path fill="#212121" d="M16 1H4c-1.1 0-2 .9-2 2v14h2V3h12V1zm3 4H8c-1.1 0-2 .9-2 2v14c0 1.1.9 2 2 2h11c1.1 0 2-.9 2-2V7c0-1.1-.9-2-2-2zm0 16H8V7h11v14z"/></svg>
<div style="position:absolute;left:1654px;top:334.38px;font-size:16.8px;line-height:16.8px;color:#212121;font-weight:400;white-space:nowrap;">Copy reference</div>
<div style="position:absolute;right:712px;top:334.15px;font-size:16.6px;line-height:16.6px;color:#212121;font-weight:400;white-space:nowrap;">Ctrl+R</div>
<svg style="position:absolute;left:1614.00px;top:378.00px;" width="24" height="24" viewBox="0 0 24 24"><path fill="#212121" d="M19 6.41L17.59 5 12 10.59 6.41 5 5 6.41 10.59 12 5 17.59 6.41 19 12 13.41 17.59 19 19 17.59 13.41 12z"/></svg>
<div style="position:absolute;left:1654px;top:382.38px;font-size:16.8px;line-height:16.8px;color:#212121;font-weight:400;white-space:nowrap;">Delete</div>
<div style="position:absolute;right:712px;top:382.15px;font-size:16.6px;line-height:16.6px;color:#212121;font-weight:400;white-space:nowrap;">Ctrl+X</div>
<svg style="position:absolute;left:0;top:0" width="2549" height="1309" viewBox="0 0 2549 1309"><rect x="1597.45" y="275.25" width="256.30" height="39.30" rx="1.5" fill="none" stroke="#f44f53" stroke-width="3.7"/></svg>
<div style="position:absolute;left:1274px;top:0;width:28px;height:1305px;background:linear-gradient(90deg,rgba(0,0,0,0.17),rgba(0,0,0,0.06) 45%,rgba(0,0,0,0));"></div>
<svg style="position:absolute;left:0;top:0" width="2549" height="1309" viewBox="0 0 2549 1309"><polygon points="925.00,383.00 952.13,390.07 948.81,383.85 1589.08,297.60 1588.92,296.40 947.80,376.11 949.44,369.25" fill="#f44f53"/></svg>
<div style="position:absolute;left:0px;top:1305px;width:2549px;height:4px;background:#55555b;"></div>
</body></html>
